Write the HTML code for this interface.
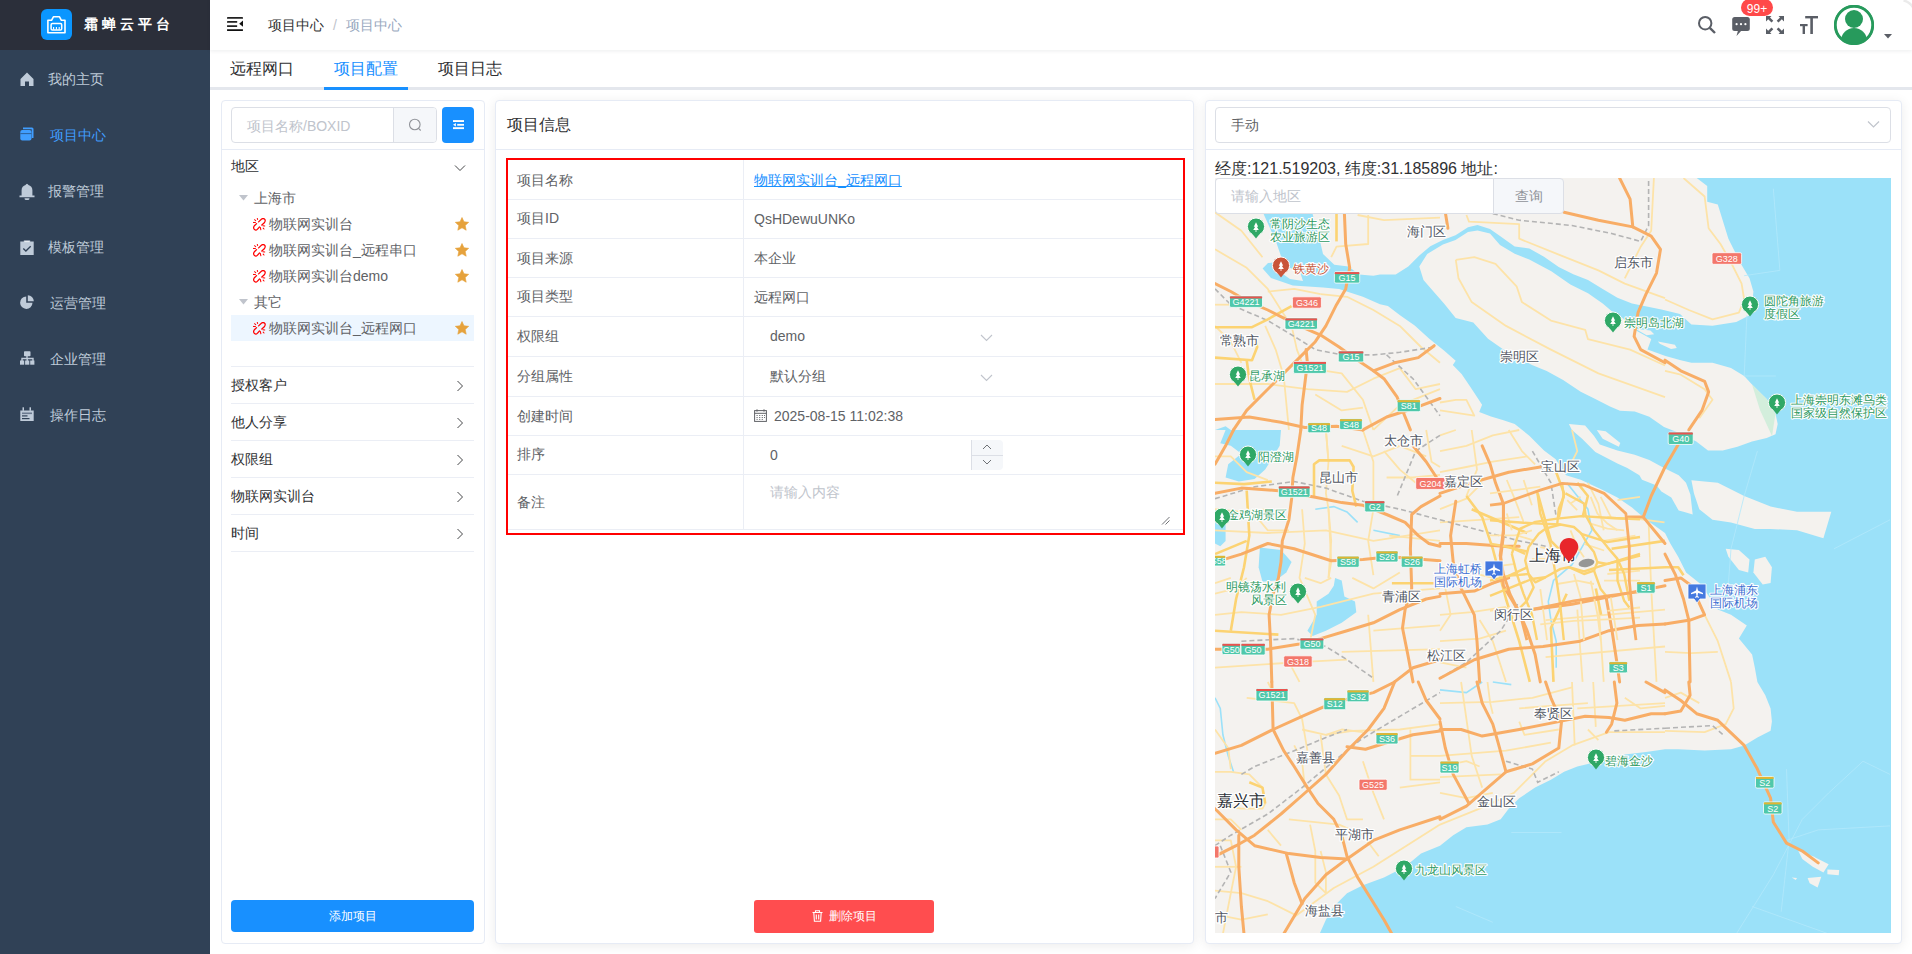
<!DOCTYPE html>
<html><head><meta charset="utf-8">
<style>
*{box-sizing:border-box;margin:0;padding:0}
html,body{width:1912px;height:954px;overflow:hidden;background:#fff;font-family:"Liberation Sans",sans-serif;font-size:14px;color:#303133}
.a{position:absolute;white-space:nowrap}
#side{position:absolute;left:0;top:0;width:210px;height:954px;background:#304156}
#logo{position:absolute;left:0;top:0;width:210px;height:50px;background:#2b2f3a}
.mt{position:absolute;line-height:16px;font-size:14px;color:#bfcbd9;white-space:nowrap}
.si{position:absolute;left:20px}
.hi{position:absolute}
.panel{position:absolute;background:#fff;border:1px solid #e6ebf5;border-radius:4px}
.sh{box-shadow:0 2px 12px 0 rgba(0,0,0,.08)}
.t14{font-size:14px;line-height:16px}
.hl{position:absolute;height:1px;background:#ebeef5}
.vl{position:absolute;width:1px;background:#ebeef5}
.lab{position:absolute;left:517px;font-size:14px;line-height:16px;color:#606266;white-space:nowrap}
.val{position:absolute;font-size:14px;line-height:16px;color:#606266;white-space:nowrap}
.chev{position:absolute}
</style></head><body>
<!-- SIDEBAR -->
<div id="side">
  <div id="logo">
    <svg class="a" style="left:41px;top:9px" width="31" height="31" viewBox="0 0 31 31">
      <rect width="31" height="31" rx="6" fill="#0a96ff"/>
      <path d="M6.9 23.8V11.3h3.6l1.9-3.5h6.1l1.9 3.5h3.6V23.8z" fill="none" stroke="#fff" stroke-width="1.6" stroke-linejoin="round"/>
      <rect x="10.1" y="14.4" width="10.6" height="6.6" rx="1.3" fill="none" stroke="#fff" stroke-width="1.5"/>
      <path d="M12.6 20.5v-2.6M15.4 20.5v-2.6M18.2 20.5v-2.6" stroke="#fff" stroke-width="1.1"/>
    </svg>
    <div class="a" style="left:84px;top:16px;font-size:14px;font-weight:bold;color:#fff;letter-spacing:4px;line-height:16px">霜蝉云平台</div>
  </div>
  <!-- home -->
  <svg class="si" style="top:72px" width="14" height="14" viewBox="0 0 14 14"><path d="M7 0.5L0.5 7v7h4.5v-4.5h4v4.5h4.5v-7z" fill="#bfcbd9"/></svg>
  <div class="mt" style="left:48px;top:71px">我的主页</div>
  <!-- project -->
  <svg class="si" style="top:127px" width="14" height="14" viewBox="0 0 14 14"><path d="M3 0.5h9a1.5 1.5 0 0 1 1.5 1.5v9h-1.8V2.3H3z" fill="#409eff"/><rect x="0.3" y="3" width="11.2" height="10.5" rx="2" fill="#409eff"/><rect x="0.3" y="6.2" width="11.2" height="0.9" fill="#2a5a8f"/></svg>
  <div class="mt" style="left:50px;top:127px;color:#409eff">项目中心</div>
  <!-- bell -->
  <svg class="si" style="top:183px;left:19px" width="16" height="17" viewBox="0 0 16 17"><path d="M8 0.8c-0.6 0-1 0.8-1.4 1.2C4.3 2.6 2.6 4.6 2.6 7.2V12.5H0.5v1.7h15v-1.7h-2.1V7.2c0-2.6-1.7-4.6-4-5.2C9 1.6 8.6 0.8 8 0.8z" fill="#bfcbd9"/><path d="M5.5 15.2a2.5 2 0 0 0 5 0z" fill="#bfcbd9"/></svg>
  <div class="mt" style="left:48px;top:183px">报警管理</div>
  <!-- clipboard -->
  <svg class="si" style="top:240px" width="14" height="15" viewBox="0 0 14 15"><path d="M0.3 1.5h3.5V0.5h6.4v1h3.5V15H0.3z" fill="#bfcbd9"/><rect x="4.5" y="0.8" width="5" height="1.4" fill="#fff" opacity=".6"/><path d="M3.3 8.5l2.6 2.5 4.8-4.7" fill="none" stroke="#304156" stroke-width="1.3"/></svg>
  <div class="mt" style="left:48px;top:239px">模板管理</div>
  <!-- pie -->
  <svg class="si" style="top:295px" width="14" height="14" viewBox="0 0 14 14"><path d="M6.2 1.5A6.2 6.2 0 1 0 12.5 7.8H6.2z" fill="#bfcbd9"/><path d="M7.8 0.2V6.3h6A6.2 6.2 0 0 0 7.8 0.2z" fill="#bfcbd9"/></svg>
  <div class="mt" style="left:50px;top:295px">运营管理</div>
  <!-- org -->
  <svg class="si" style="top:351px" width="15" height="14" viewBox="0 0 15 14"><rect x="4" y="0.2" width="6.5" height="5" rx="0.8" fill="#bfcbd9"/><path d="M7 5v2.2M2 10V7.5h11V10M7.2 7.5V10" fill="none" stroke="#bfcbd9" stroke-width="1.4"/><rect x="0" y="9.5" width="4.2" height="4.2" fill="#bfcbd9"/><rect x="5.1" y="9.5" width="4.2" height="4.2" fill="#bfcbd9"/><rect x="10.2" y="9.5" width="4.2" height="4.2" fill="#bfcbd9"/></svg>
  <div class="mt" style="left:50px;top:351px">企业管理</div>
  <!-- calendar -->
  <svg class="si" style="top:407px" width="14" height="14" viewBox="0 0 14 14"><path d="M0.3 3.5h13.4V14H0.3z" fill="#bfcbd9"/><rect x="2.5" y="0.3" width="1.5" height="3.5" fill="#bfcbd9"/><rect x="9.5" y="0.3" width="1.5" height="3.5" fill="#bfcbd9"/><rect x="2" y="5.5" width="10" height="1.6" fill="#6b7a8f"/><rect x="2" y="8.3" width="5.5" height="1.2" fill="#304156"/><rect x="2" y="11" width="7.5" height="1.2" fill="#304156"/></svg>
  <div class="mt" style="left:50px;top:407px">操作日志</div>
</div>

<!-- HEADER -->
<div class="a" style="left:210px;top:0;width:1702px;height:50px;background:#fff;box-shadow:0 1px 4px rgba(0,21,41,.08);z-index:2"></div>
<div style="position:absolute;left:0;top:0;z-index:3">
  <svg class="hi" style="left:227px;top:17px" width="16" height="14" viewBox="0 0 16 14"><rect x="0" y="0" width="16" height="1.8" rx="0.4" fill="#222"/><rect x="0" y="4.1" width="10.2" height="1.7" rx="0.4" fill="#222"/><rect x="0" y="8.2" width="10.2" height="1.7" rx="0.4" fill="#222"/><rect x="0" y="12.2" width="16" height="1.8" rx="0.4" fill="#111"/><path d="M16 3.6v6.2l-3.8-3.1z" fill="#111"/></svg>
  <div class="a t14" style="left:268px;top:17px;color:#303133">项目中心</div>
  <div class="a t14" style="left:333px;top:17px;color:#c0c4cc">/</div>
  <div class="a t14" style="left:346px;top:17px;color:#97a8be">项目中心</div>
  <!-- search -->
  <svg class="hi" style="left:1697px;top:15px" width="20" height="20" viewBox="0 0 20 20"><circle cx="8.2" cy="8.2" r="6.2" fill="none" stroke="#5a5e66" stroke-width="2"/><path d="M12.8 12.8l5.2 5.2" stroke="#5a5e66" stroke-width="2.4"/></svg>
  <!-- message -->
  <svg class="hi" style="left:1731px;top:16px" width="20" height="21" viewBox="0 0 20 21"><rect x="1.2" y="1" width="17.6" height="14" rx="2.5" fill="#5a5e66"/><path d="M7 14.5l-1.5 5.5 5-5.5z" fill="#5a5e66"/><circle cx="5.6" cy="8.2" r="1.1" fill="#fff"/><circle cx="10" cy="8.2" r="1.1" fill="#fff"/><circle cx="14.4" cy="8.2" r="1.1" fill="#fff"/></svg>
  <div class="a" style="left:1741px;top:-1px;width:32px;height:17px;border-radius:9px;background:#ff4949;color:#fff;font-size:12px;line-height:20px;text-align:center">99+</div>
  <!-- fullscreen -->
  <svg class="hi" style="left:1766px;top:16px" width="18" height="18" viewBox="0 0 18 18" fill="#5a5e66"><path d="M0 0h5.5L4 1.5l3.3 3.3-1.8 1.8L2.2 3.3 0 5.5z"/><path d="M18 0h-5.5L14 1.5l-3.3 3.3 1.8 1.8 3.3-3.3L18 5.5z"/><path d="M0 18h5.5L4 16.5l3.3-3.3-1.8-1.8-3.3 3.3L0 12.5z"/><path d="M18 18h-5.5l1.5-1.5-3.3-3.3 1.8-1.8 3.3 3.3 2.2-2.2z"/></svg>
  <!-- font size -->
  <svg class="hi" style="left:1800px;top:16px" width="19" height="18" viewBox="0 0 19 18" fill="#5a5e66"><rect x="5.2" y="0" width="12.8" height="2.4"/><rect x="10.3" y="0" width="2.6" height="18"/><rect x="0" y="8" width="7.6" height="2.2"/><rect x="2.6" y="8" width="2.4" height="10"/></svg>
  <!-- avatar -->
  <svg class="hi" style="left:1834px;top:5px" width="40" height="40" viewBox="0 0 40 40"><defs><clipPath id="avc"><circle cx="20" cy="20" r="18.5"/></clipPath></defs><circle cx="20" cy="20" r="18.6" fill="none" stroke="#279a5c" stroke-width="2.6"/><g clip-path="url(#avc)"><circle cx="20" cy="14" r="9" fill="#279a5c"/><ellipse cx="20" cy="36" rx="13" ry="13" fill="#279a5c"/></g><circle cx="20" cy="20" r="19" fill="none" stroke="#279a5c" stroke-width="2.2"/></svg>
  <svg class="hi" style="left:1884px;top:34px" width="8" height="5" viewBox="0 0 8 5"><path d="M0 0h8L4 4.5z" fill="#5a5e66"/></svg>
</div>

<!-- TABS -->
<div class="a" style="left:210px;top:87px;width:1702px;height:3px;background:#e4e7ed"></div>
<div class="a" style="left:230px;top:60px;font-size:16px;line-height:18px;color:#303133">远程网口</div>
<div class="a" style="left:334px;top:60px;font-size:16px;line-height:18px;color:#1890ff">项目配置</div>
<div class="a" style="left:438px;top:60px;font-size:16px;line-height:18px;color:#303133">项目日志</div>
<div class="a" style="left:324px;top:87px;width:84px;height:3px;background:#1890ff"></div>

<!-- LEFT PANEL -->
<div class="panel" style="left:221px;top:100px;width:264px;height:844px"></div>
<div class="a" style="left:231px;top:107px;width:206px;height:36px;border:1px solid #dcdfe6;border-radius:4px;background:#fff"></div>
<div class="a" style="left:393px;top:108px;width:43px;height:34px;background:#f5f7fa;border-left:1px solid #dcdfe6;border-radius:0 3px 3px 0"></div>
<div class="a t14" style="left:247px;top:118px;color:#c0c4cc">项目名称/BOXID</div>
<svg class="hi" style="left:408px;top:118px" width="14" height="14" viewBox="0 0 14 14"><circle cx="6.8" cy="6.5" r="5.3" fill="none" stroke="#909399" stroke-width="1.1"/><path d="M10.5 10.3l2.2 2.2" stroke="#909399" stroke-width="1.1"/></svg>
<div class="a" style="left:442px;top:107px;width:32px;height:36px;background:#1890ff;border-radius:4px"></div>
<svg class="hi" style="left:452px;top:119px" width="12" height="12" viewBox="0 0 12 12" fill="#fff"><rect x="1" y="1.1" width="11" height="1.9"/><rect x="5.2" y="4.9" width="6.8" height="1.8"/><rect x="1" y="8.2" width="11" height="1.9"/><path d="M3.9 4v3.6L1 5.8z"/></svg>
<div class="hl" style="left:222px;top:149px;width:262px;background:#e6ebf5"></div>
<div class="a t14" style="left:231px;top:158px;color:#303133">地区</div>
<svg class="chev" style="left:454px;top:164px" width="12" height="8" viewBox="0 0 12 8"><path d="M1 1.5l5 5 5-5" fill="none" stroke="#303133" stroke-width="0.9"/></svg>
<svg class="hi" style="left:239px;top:195px" width="9" height="6" viewBox="0 0 9 6"><path d="M0 0h9L4.5 5.5z" fill="#c0c4cc"/></svg>
<div class="a t14" style="left:254px;top:190px;color:#606266">上海市</div>
<div class="a" style="left:231px;top:315px;width:243px;height:26px;background:#edf6ff"></div>
<svg class="hi" style="left:239px;top:299px" width="9" height="6" viewBox="0 0 9 6"><path d="M0 0h9L4.5 5.5z" fill="#c0c4cc"/></svg>
<div class="a t14" style="left:254px;top:294px;color:#606266">其它</div>
<svg class="hi" style="left:253px;top:218px" width="13" height="13" viewBox="0 0 13 13"><path d="M5.6 3.9L8.6 1.1Q10.6 -0.3 12 1.6Q12.6 3.2 11.3 4.8L8.8 7" fill="none" stroke="#f00" stroke-width="1.25" stroke-linecap="round"/><path d="M3.6 5.6L1.2 8Q-0.1 9.9 1.5 11.6Q3 12.6 4.3 11.4L6.5 9" fill="none" stroke="#f00" stroke-width="1.25" stroke-linecap="round"/><path d="M1.5 1.7L2.7 2.6M0.5 4.4L2.4 4.6M4.3 0.5L4.6 1.4M9.8 7.8L11.8 8M10.2 10.1L11 11M7.3 9.4L7.9 11.8" stroke="#f00" stroke-width="1.05" stroke-linecap="round"/></svg>
<div class="a t14" style="left:269px;top:216px;color:#606266">物联网实训台</div>
<svg class="hi" style="left:455px;top:217px" width="14" height="14" viewBox="0 0 14 14"><path d="M7 0.5l2 4.3 4.7 0.5-3.5 3.2 1 4.7L7 10.8 2.8 13.2l1-4.7L0.3 5.3 5 4.8z" fill="#e6a23c" stroke="#e6a23c" stroke-width="0.6" stroke-linejoin="round"/></svg>
<svg class="hi" style="left:253px;top:244px" width="13" height="13" viewBox="0 0 13 13"><path d="M5.6 3.9L8.6 1.1Q10.6 -0.3 12 1.6Q12.6 3.2 11.3 4.8L8.8 7" fill="none" stroke="#f00" stroke-width="1.25" stroke-linecap="round"/><path d="M3.6 5.6L1.2 8Q-0.1 9.9 1.5 11.6Q3 12.6 4.3 11.4L6.5 9" fill="none" stroke="#f00" stroke-width="1.25" stroke-linecap="round"/><path d="M1.5 1.7L2.7 2.6M0.5 4.4L2.4 4.6M4.3 0.5L4.6 1.4M9.8 7.8L11.8 8M10.2 10.1L11 11M7.3 9.4L7.9 11.8" stroke="#f00" stroke-width="1.05" stroke-linecap="round"/></svg>
<div class="a t14" style="left:269px;top:242px;color:#606266">物联网实训台_远程串口</div>
<svg class="hi" style="left:455px;top:243px" width="14" height="14" viewBox="0 0 14 14"><path d="M7 0.5l2 4.3 4.7 0.5-3.5 3.2 1 4.7L7 10.8 2.8 13.2l1-4.7L0.3 5.3 5 4.8z" fill="#e6a23c" stroke="#e6a23c" stroke-width="0.6" stroke-linejoin="round"/></svg>
<svg class="hi" style="left:253px;top:270px" width="13" height="13" viewBox="0 0 13 13"><path d="M5.6 3.9L8.6 1.1Q10.6 -0.3 12 1.6Q12.6 3.2 11.3 4.8L8.8 7" fill="none" stroke="#f00" stroke-width="1.25" stroke-linecap="round"/><path d="M3.6 5.6L1.2 8Q-0.1 9.9 1.5 11.6Q3 12.6 4.3 11.4L6.5 9" fill="none" stroke="#f00" stroke-width="1.25" stroke-linecap="round"/><path d="M1.5 1.7L2.7 2.6M0.5 4.4L2.4 4.6M4.3 0.5L4.6 1.4M9.8 7.8L11.8 8M10.2 10.1L11 11M7.3 9.4L7.9 11.8" stroke="#f00" stroke-width="1.05" stroke-linecap="round"/></svg>
<div class="a t14" style="left:269px;top:268px;color:#606266">物联网实训台demo</div>
<svg class="hi" style="left:455px;top:269px" width="14" height="14" viewBox="0 0 14 14"><path d="M7 0.5l2 4.3 4.7 0.5-3.5 3.2 1 4.7L7 10.8 2.8 13.2l1-4.7L0.3 5.3 5 4.8z" fill="#e6a23c" stroke="#e6a23c" stroke-width="0.6" stroke-linejoin="round"/></svg>
<svg class="hi" style="left:253px;top:322px" width="13" height="13" viewBox="0 0 13 13"><path d="M5.6 3.9L8.6 1.1Q10.6 -0.3 12 1.6Q12.6 3.2 11.3 4.8L8.8 7" fill="none" stroke="#f00" stroke-width="1.25" stroke-linecap="round"/><path d="M3.6 5.6L1.2 8Q-0.1 9.9 1.5 11.6Q3 12.6 4.3 11.4L6.5 9" fill="none" stroke="#f00" stroke-width="1.25" stroke-linecap="round"/><path d="M1.5 1.7L2.7 2.6M0.5 4.4L2.4 4.6M4.3 0.5L4.6 1.4M9.8 7.8L11.8 8M10.2 10.1L11 11M7.3 9.4L7.9 11.8" stroke="#f00" stroke-width="1.05" stroke-linecap="round"/></svg>
<div class="a t14" style="left:269px;top:320px;color:#606266">物联网实训台_远程网口</div>
<svg class="hi" style="left:455px;top:321px" width="14" height="14" viewBox="0 0 14 14"><path d="M7 0.5l2 4.3 4.7 0.5-3.5 3.2 1 4.7L7 10.8 2.8 13.2l1-4.7L0.3 5.3 5 4.8z" fill="#e6a23c" stroke="#e6a23c" stroke-width="0.6" stroke-linejoin="round"/></svg>
<div class="hl" style="left:231px;top:366px;width:243px"></div>
<div class="hl" style="left:231px;top:403px;width:243px"></div>
<div class="hl" style="left:231px;top:440px;width:243px"></div>
<div class="hl" style="left:231px;top:477px;width:243px"></div>
<div class="hl" style="left:231px;top:514px;width:243px"></div>
<div class="hl" style="left:231px;top:551px;width:243px"></div>
<div class="a t14" style="left:231px;top:377px;color:#303133">授权客户</div>
<div class="a t14" style="left:231px;top:414px;color:#303133">他人分享</div>
<div class="a t14" style="left:231px;top:451px;color:#303133">权限组</div>
<div class="a t14" style="left:231px;top:488px;color:#303133">物联网实训台</div>
<div class="a t14" style="left:231px;top:525px;color:#303133">时间</div>
<svg class="chev" style="left:456px;top:380px" width="8" height="12" viewBox="0 0 8 12"><path d="M1.5 1l5 5-5 5" fill="none" stroke="#303133" stroke-width="0.9"/></svg>
<svg class="chev" style="left:456px;top:417px" width="8" height="12" viewBox="0 0 8 12"><path d="M1.5 1l5 5-5 5" fill="none" stroke="#303133" stroke-width="0.9"/></svg>
<svg class="chev" style="left:456px;top:454px" width="8" height="12" viewBox="0 0 8 12"><path d="M1.5 1l5 5-5 5" fill="none" stroke="#303133" stroke-width="0.9"/></svg>
<svg class="chev" style="left:456px;top:491px" width="8" height="12" viewBox="0 0 8 12"><path d="M1.5 1l5 5-5 5" fill="none" stroke="#303133" stroke-width="0.9"/></svg>
<svg class="chev" style="left:456px;top:528px" width="8" height="12" viewBox="0 0 8 12"><path d="M1.5 1l5 5-5 5" fill="none" stroke="#303133" stroke-width="0.9"/></svg>
<div class="a" style="left:231px;top:900px;width:243px;height:32px;background:#1890ff;border-radius:4px;color:#fff;font-size:12px;line-height:32px;text-align:center">添加项目</div>

<!-- MIDDLE PANEL -->
<div class="panel sh" style="left:495px;top:100px;width:699px;height:844px"></div>
<div class="a" style="left:507px;top:116px;font-size:16px;line-height:18px;color:#303133">项目信息</div>
<div class="hl" style="left:496px;top:149px;width:697px;background:#e6ebf5"></div>
<div class="hl" style="left:508px;top:199px;width:675px"></div>
<div class="hl" style="left:508px;top:238px;width:675px"></div>
<div class="hl" style="left:508px;top:277px;width:675px"></div>
<div class="hl" style="left:508px;top:316px;width:675px"></div>
<div class="hl" style="left:508px;top:356px;width:675px"></div>
<div class="hl" style="left:508px;top:396px;width:675px"></div>
<div class="hl" style="left:508px;top:435px;width:675px"></div>
<div class="hl" style="left:508px;top:474px;width:675px"></div>
<div class="hl" style="left:508px;top:529px;width:675px"></div>
<div class="vl" style="left:743px;top:160px;height:370px"></div>
<div class="a" style="left:506px;top:158px;width:679px;height:377px;border:2px solid #f00"></div>
<div class="lab" style="top:172px">项目名称</div>
<div class="lab" style="top:210px">项目ID</div>
<div class="lab" style="top:250px">项目来源</div>
<div class="lab" style="top:288px">项目类型</div>
<div class="lab" style="top:328px">权限组</div>
<div class="lab" style="top:368px">分组属性</div>
<div class="lab" style="top:408px">创建时间</div>
<div class="lab" style="top:446px">排序</div>
<div class="lab" style="top:494px">备注</div>
<div class="val" style="left:754px;top:172px;color:#1890ff;text-decoration:underline">物联网实训台_远程网口</div>
<div class="val" style="left:754px;top:211px">QsHDewuUNKo</div>
<div class="val" style="left:754px;top:250px">本企业</div>
<div class="val" style="left:754px;top:289px">远程网口</div>
<div class="val" style="left:770px;top:328px">demo</div>
<svg class="chev" style="left:980px;top:334px" width="13" height="8" viewBox="0 0 13 8"><path d="M1 1l5.5 5.5 5.5-5.5" fill="none" stroke="#c0c4cc" stroke-width="1.1"/></svg>
<div class="val" style="left:770px;top:368px">默认分组</div>
<svg class="chev" style="left:980px;top:374px" width="13" height="8" viewBox="0 0 13 8"><path d="M1 1l5.5 5.5 5.5-5.5" fill="none" stroke="#c0c4cc" stroke-width="1.1"/></svg>
<svg class="hi" style="left:754px;top:409px" width="13" height="13" viewBox="0 0 13 13"><rect x="0.6" y="1.6" width="11.8" height="10.8" fill="none" stroke="#606266" stroke-width="1"/><path d="M0.6 4.3h11.8" stroke="#606266" stroke-width="1"/><path d="M3 0.3v2.4M10 0.3v2.4" stroke="#606266" stroke-width="1"/><path d="M2.5 6.5h1.2M5.1 6.5h1.2M7.7 6.5h1.2M10 6.5h1M2.5 8.5h1.2M5.1 8.5h1.2M7.7 8.5h1.2M10 8.5h1M2.5 10.4h1.2M5.1 10.4h1.2M7.7 10.4h1.2" stroke="#606266" stroke-width="0.9"/></svg>
<div class="val" style="left:774px;top:408px">2025-08-15 11:02:38</div>
<div class="val" style="left:770px;top:447px">0</div>
<div class="a" style="left:971px;top:440px;width:32px;height:30px;background:#f5f7fa;border-left:1px solid #dcdfe6;border-radius:0 4px 4px 0"></div>
<div class="hl" style="left:972px;top:455px;width:31px;background:#dcdfe6"></div>
<svg class="chev" style="left:982px;top:444px" width="10" height="6" viewBox="0 0 10 6"><path d="M1 5l4-4 4 4" fill="none" stroke="#606266" stroke-width="0.9"/></svg>
<svg class="chev" style="left:982px;top:459px" width="10" height="6" viewBox="0 0 10 6"><path d="M1 1l4 4 4-4" fill="none" stroke="#606266" stroke-width="0.9"/></svg>
<div class="val" style="left:770px;top:484px;color:#c0c4cc">请输入内容</div>
<svg class="hi" style="left:1161px;top:516px" width="9" height="9" viewBox="0 0 9 9"><path d="M1 8.5L8.5 1M4.5 8.5L8.5 4.5" stroke="#606266" stroke-width="0.9"/></svg>

<div class="a" style="left:754px;top:900px;width:180px;height:33px;background:#ff4d4f;border-radius:3px;color:#fff;font-size:12px;line-height:33px;text-align:center;padding-left:18px">删除项目</div>
<svg class="hi" style="left:812px;top:910px" width="11" height="12" viewBox="0 0 11 12"><path d="M0.5 2.5h10M3.5 2.5V0.8h4v1.7M1.8 2.5l0.6 8.7h6.2l0.6-8.7M4.3 4.5v5M6.7 4.5v5" fill="none" stroke="#fff" stroke-width="1.1"/></svg>

<!-- RIGHT PANEL -->
<div class="panel sh" style="left:1205px;top:100px;width:697px;height:844px"></div>
<div class="a" style="left:1215px;top:107px;width:676px;height:36px;border:1px solid #dcdfe6;border-radius:4px"></div>
<div class="a t14" style="left:1231px;top:117px;color:#606266">手动</div>
<svg class="chev" style="left:1867px;top:120px" width="13" height="9" viewBox="0 0 13 9"><path d="M1 1.5l5.5 5.5 5.5-5.5" fill="none" stroke="#c0c4cc" stroke-width="1.2"/></svg>
<div class="hl" style="left:1206px;top:149px;width:695px;background:#e6ebf5"></div>
<div class="a" style="left:1215px;top:160px;font-size:16px;line-height:18px;color:#303133">经度:121.519203, 纬度:31.185896 地址:</div>
<div id="map" class="a" style="left:1215px;top:178px;width:676px;height:755px;background:#f4f2ef;overflow:hidden"><!--MAP--><svg width="676" height="755" viewBox="0 0 676 755" style="position:absolute;left:0;top:0">
<path d="M48.6 0.0 L97.6 0.0 L97.6 36.0 L105.0 63.0 L108.0 76.0 L119.3 86.7 L133.5 88.6 L144.0 96.4 L158.4 97.7 L165.0 96.5 L180.7 96.5 L193.3 88.6 L204.3 77.6 L215.3 68.2 L227.9 61.9 L240.5 57.2 L253.0 49.3 L262.5 46.9 L275.0 50.9 L285.0 58.1 L299.7 68.4 L314.3 70.6 L329.0 78.7 L343.7 88.9 L358.3 96.3 L373.0 102.1 L387.7 110.9 L402.4 119.7 L417.0 125.6 L431.7 128.5 L446.4 131.5 L465.0 135.9 L476.4 146.5 L497.5 147.8 L521.3 143.9 L534.5 137.3 L537.1 126.7 L538.4 113.5 L534.5 100.3 L526.6 87.1 L516.0 66.0 L513.4 60.7 L502.8 26.4 L492.2 23.8 L492.2 7.9 L481.7 0.0 L676.0 0.0 L676.0 755.0 L105.0 755.0 L110.9 741.7 L118.8 728.5 L132.0 715.3 L147.9 707.3 L169.0 699.4 L190.1 688.8 L206.0 675.6 L225.0 667.7 L238.2 657.2 L251.4 649.2 L272.5 646.6 L285.7 641.3 L293.7 630.7 L304.2 620.2 L320.1 609.6 L335.9 601.7 L349.1 593.8 L362.3 588.5 L372.9 585.9 L388.7 580.6 L409.8 576.6 L431.0 574.0 L450.0 571.3 L463.2 571.3 L489.6 572.6 L516.0 571.3 L529.2 567.4 L542.4 559.4 L555.6 552.8 L556.9 543.6 L555.6 530.4 L550.3 517.2 L542.4 504.0 L539.8 489.6 L537.1 476.4 L523.9 460.6 L531.8 447.4 L516.0 436.8 L502.8 431.5 L492.2 415.7 L484.3 405.1 L471.1 394.6 L463.2 378.7 L455.3 365.5 L450.0 355.0 L431.7 342.0 L417.0 329.6 L402.4 319.4 L387.7 312.0 L365.7 301.7 L351.0 297.3 L340.7 281.2 L329.0 272.4 L314.3 257.7 L299.7 246.0 L287.7 242.0 L276.0 238.4 L264.2 234.0 L267.1 226.7 L255.4 209.1 L246.6 195.9 L237.8 187.1 L240.7 182.7 L229.0 172.4 L214.3 160.7 L199.7 147.5 L185.0 137.2 L172.9 127.9 L165.0 126.3 L147.9 118.8 L124.1 110.9 L108.0 109.4 L77.8 107.5 L56.0 100.0 L47.6 90.5 L53.0 85.0 L68.0 84.0 L65.6 77.0 L60.8 63.0 L48.6 36.0Z" fill="#9be1f9"/>
<path d="M442.9 163.4 L459.9 166.7 L461.8 170.0 L456.1 171.0 L444.8 165.8Z" fill="#f4f2ee"/>
<path d="M420.3 150.7 L435.4 152.6 L439.2 156.3 L431.6 157.3Z" fill="#f4f2ee"/>
<path d="M583.3 673.0 L597.8 678.2 L613.7 686.2 L608.4 694.6 L597.8 688.8 L587.3 680.9Z" fill="#f4f2ee"/>
<path d="M612.4 691.4 L624.2 692.0 L623.7 697.2 L612.4 696.2Z" fill="#f4f2ee"/>
<path d="M592.6 699.9 L606.3 698.8 L602.6 709.4 L594.7 705.2Z" fill="#f4f2ee"/>
<path d="M576.7 699.4 L582.0 699.9 L580.7 702.0Z" fill="#f4f2ee"/>
<path d="M204.3 88.6 L212.2 76.0 L227.9 66.6 L240.5 61.9 L253.0 54.0 L262.5 52.4 L275.0 55.6 L285.0 66.9 L299.7 75.7 L314.3 81.6 L336.3 93.3 L355.4 106.5 L373.0 115.3 L387.7 125.6 L396.5 133.0 L408.0 140.3 L419.3 151.6 L436.3 161.0 L432.5 171.4 L450.5 178.0 L465.8 182.2 L476.4 184.8 L497.5 184.8 L516.0 190.1 L529.2 198.0 L537.0 206.4 L551.7 221.1 L560.5 235.7 L562.7 246.0 L560.5 256.3 L551.7 259.9 L537.0 263.6 L522.4 268.7 L507.7 272.4 L493.0 272.4 L481.3 263.6 L463.7 254.8 L449.0 249.0 L434.3 238.7 L419.7 233.5 L405.0 232.8 L395.0 228.4 L380.3 221.1 L365.7 213.7 L348.1 202.0 L331.7 193.0 L317.0 187.1 L287.7 171.0 L273.0 160.7 L258.3 144.5 L240.7 140.1 L229.0 125.5 L218.7 113.7 L208.5 102.0Z" fill="#f4f2ee"/>
<path d="M353.9 246.0 L370.1 247.5 L378.9 257.7 L384.8 266.5 L402.4 272.4 L419.7 276.8 L434.3 282.0 L449.0 290.0 L463.7 297.3 L471.0 304.7 L475.4 316.4 L477.7 336.5 L468.5 333.8 L463.7 332.6 L456.3 319.4 L446.4 313.5 L441.7 307.6 L427.0 301.7 L424.4 297.3 L412.3 290.0 L402.4 285.6 L380.3 273.9 L367.1 260.7 L356.9 251.9Z" fill="#f4f2ee"/>
<path d="M476.4 302.2 L502.8 304.8 L529.2 318.0 L555.6 328.6 L582.0 333.8 L616.3 333.8 L608.4 360.2 L582.0 352.3 L555.6 351.0 L539.8 351.0 L516.0 344.4 L497.5 341.8 L484.3 331.2 L479.0 315.4Z" fill="#f4f2ee"/>
<path d="M381.8 251.9 L390.6 253.3 L405.3 265.1 L403.8 268.7 L387.7 260.7Z" fill="#f4f2ee"/>
<path d="M510.7 370.8 L523.9 372.1 L534.5 381.4 L533.2 394.6 L523.9 391.9 L513.4 378.7Z" fill="#f4f2ee"/>
<path d="M539.8 381.4 L550.3 378.7 L556.9 389.3 L555.6 405.1 L547.7 406.4 L538.4 394.6Z" fill="#f4f2ee"/>
<path d="M68.0 87.0 L85.0 94.0 L88.0 103.0 L75.0 101.0 L65.0 94.0Z" fill="#f4f2ee"/>
</svg>
<svg width="676" height="755" viewBox="0 0 676 755" style="position:absolute;left:0;top:0"><path d="M648.0 583.2 L613.7 614.9 L587.3 641.3 L558.3 696.8 L521.3 755.9" fill="none" stroke="#b3e8fb" stroke-width="0.8"/>
<path d="M571.5 662.4 L603.2 651.9 L675.0 647.9" fill="none" stroke="#b3e8fb" stroke-width="0.8"/>
<path d="M537.1 728.5 L613.7 755.9" fill="none" stroke="#b3e8fb" stroke-width="0.8"/>
<path d="M648.0 583.2 L675.0 596.4" fill="none" stroke="#b3e8fb" stroke-width="0.8"/>
<path d="M571.5 591.1 L574.1 662.4 L566.2 733.7" fill="none" stroke="#b3e8fb" stroke-width="0.8"/>
<path d="M542.4 273.1 L529.2 318.0 L516.0 370.8 L513.4 405.2" fill="none" stroke="#b3e8fb" stroke-width="0.8"/>
<path d="M619.0 370.8 L675.0 341.8" fill="none" stroke="#b3e8fb" stroke-width="0.8"/>
<path d="M558.3 10.6 L564.9 92.4 L529.2 97.7" fill="none" stroke="#b3e8fb" stroke-width="0.8"/>
<path d="M531.9 137.3 L529.2 198.0 L560.9 198.0" fill="none" stroke="#b3e8fb" stroke-width="0.8"/>
<path d="M240.8 728.5 L277.8 744.3" fill="none" stroke="#b3e8fb" stroke-width="0.8"/>
<path d="M296.3 654.5 L346.5 654.5" fill="none" stroke="#b3e8fb" stroke-width="0.8"/>
<path d="M10.6 252.0 L66.0 252.0 L64.7 267.8 L56.8 281.0 L50.2 291.6 L39.6 300.9 L23.8 303.5 L10.6 299.5 L13.2 286.3 L26.4 275.8 L15.8 267.8 L5.3 265.2Z" fill="#9be1f9"/>
<path d="M0.0 344.4 L10.6 347.1 L10.6 362.9 L5.3 368.2 L0.0 365.5Z" fill="#9be1f9"/>
<path d="M44.9 369.5 L66.0 372.1 L76.6 384.0 L71.3 394.6 L60.7 402.5 L47.5 403.8 L43.6 389.3Z" fill="#9be1f9"/>
<path d="M120.1 399.9 L126.7 402.5 L129.4 418.4 L140.0 423.6 L141.3 434.2 L126.7 444.8 L110.9 452.7 L97.7 458.0 L92.4 452.7 L101.7 436.8 L101.7 423.6 L113.5 415.7 L118.8 407.8Z" fill="#9be1f9"/>
<path d="M0.0 251.9 L10.6 248.2 L15.8 251.9Z" fill="#9be1f9"/>
<path d="M351.7 304.8 L362.3 318.0 L372.9 331.2 L376.8 352.3 L367.6 368.2 L357.0 386.7 L338.5 402.5 L333.3 423.6 L335.9 442.1 L341.2 463.2 L341.2 489.7" fill="none" stroke="#9be1f9" stroke-width="1.6"/>
<path d="M0.0 519.8 L5.3 530.4 L7.9 556.8 L13.2 577.9 L18.5 593.8" fill="none" stroke="#9be1f9" stroke-width="1.6"/>
<path d="M100.3 331.2 L118.8 328.6 L132.0 333.9 L142.6 344.4" fill="none" stroke="#9be1f9" stroke-width="1.6"/>
<path d="M158.4 352.3 L184.8 357.6" fill="none" stroke="#9be1f9" stroke-width="1.6"/>
<path d="M225.0 511.9 L251.4 514.6 L267.2 504.0" fill="none" stroke="#9be1f9" stroke-width="1.6"/>
<path d="M277.8 504.0 L296.3 506.6" fill="none" stroke="#9be1f9" stroke-width="1.6"/>
<path d="M0.0 71.3 L31.7 89.8 L52.8 110.9 L66.0 132.0 L76.6 147.9 L81.9 171.6 L87.1 184.8" fill="none" stroke="#fde3a8" stroke-width="1.8" stroke-linejoin="round"/>
<path d="M105.6 116.2 L132.0 118.8 L158.4 132.0 L184.8 147.9 L206.0 169.0 L225.0 184.8" fill="none" stroke="#fde3a8" stroke-width="1.8" stroke-linejoin="round"/>
<path d="M92.4 190.1 L126.7 195.4 L147.9 221.8 L158.4 251.9" fill="none" stroke="#fde3a8" stroke-width="1.8" stroke-linejoin="round"/>
<path d="M0.0 206.0 L52.8 206.0 L92.4 211.2 L132.0 213.9 L158.4 200.7 L184.8 190.1" fill="none" stroke="#fde3a8" stroke-width="1.8" stroke-linejoin="round"/>
<path d="M142.6 37.0 L169.0 42.2 L225.0 39.6" fill="none" stroke="#fde3a8" stroke-width="1.8" stroke-linejoin="round"/>
<path d="M153.2 37.0 L153.2 66.0 L121.5 68.7 L116.2 79.2" fill="none" stroke="#fde3a8" stroke-width="1.8" stroke-linejoin="round"/>
<path d="M0.0 126.7 L26.4 126.7" fill="none" stroke="#fde3a8" stroke-width="1.8" stroke-linejoin="round"/>
<path d="M50.2 147.9 L60.7 171.6 L68.7 198.0 L73.9 251.9" fill="none" stroke="#fde3a8" stroke-width="1.8" stroke-linejoin="round"/>
<path d="M158.4 251.9 L184.8 227.1 L225.0 211.2" fill="none" stroke="#fde3a8" stroke-width="1.8" stroke-linejoin="round"/>
<path d="M251.4 37.0 L254.0 43.6 L304.2 46.2 L304.2 60.7 L343.8 76.6 L383.4 92.4 L409.8 105.6 L450.0 120.1" fill="none" stroke="#fde3a8" stroke-width="1.8" stroke-linejoin="round"/>
<path d="M240.8 81.9 L259.3 79.2 L280.5 85.8 L301.6 108.3 L306.9 124.1 L335.9 142.6 L370.2 151.8 L372.9 161.1 L415.1 171.6 L450.0 187.5" fill="none" stroke="#fde3a8" stroke-width="1.8" stroke-linejoin="round"/>
<path d="M240.8 81.9 L243.5 100.3 L256.7 124.1 L291.0 147.9 L335.9 171.6 L383.4 195.4 L450.0 219.2" fill="none" stroke="#fde3a8" stroke-width="1.8" stroke-linejoin="round"/>
<path d="M409.8 100.3 L425.7 68.7 L436.2 52.8 L438.9 0.0" fill="none" stroke="#fde3a8" stroke-width="1.8" stroke-linejoin="round"/>
<path d="M225.0 224.5 L240.8 221.8 L251.4 221.8 L259.3 237.7 L225.0 232.4" fill="none" stroke="#fde3a8" stroke-width="1.8" stroke-linejoin="round"/>
<path d="M468.5 0.0 L489.6 18.5 L493.6 50.2 L505.5 66.0 L516.0 84.5 L526.6 105.6 L529.2 121.5 L523.9 134.7 L497.5 141.3 L473.8 132.0 L450.0 121.5" fill="none" stroke="#fde3a8" stroke-width="1.8" stroke-linejoin="round"/>
<path d="M450.0 192.8 L465.8 196.7 L489.6 211.2 L497.5 221.8 L484.3 240.3" fill="none" stroke="#fde3a8" stroke-width="1.8" stroke-linejoin="round"/>
<path d="M110.9 252.0 L113.5 283.7" fill="none" stroke="#fde3a8" stroke-width="1.8" stroke-linejoin="round"/>
<path d="M147.9 252.0 L158.4 283.7 L158.4 331.2 L153.2 362.9 L158.4 397.2" fill="none" stroke="#fde3a8" stroke-width="1.8" stroke-linejoin="round"/>
<path d="M0.0 352.3 L52.8 355.0 L110.9 352.3 L158.4 362.9 L225.0 352.3" fill="none" stroke="#fde3a8" stroke-width="1.8" stroke-linejoin="round"/>
<path d="M87.1 331.2 L89.8 365.5 L84.5 399.9 L100.3 436.8 L95.1 463.2" fill="none" stroke="#fde3a8" stroke-width="1.8" stroke-linejoin="round"/>
<path d="M113.5 331.2 L116.2 384.0 L113.5 399.9" fill="none" stroke="#fde3a8" stroke-width="1.8" stroke-linejoin="round"/>
<path d="M0.0 436.8 L26.4 434.2 L66.0 436.8 L105.6 428.9 L158.4 415.7 L225.0 410.4" fill="none" stroke="#fde3a8" stroke-width="1.8" stroke-linejoin="round"/>
<path d="M153.2 436.8 L158.4 503.9" fill="none" stroke="#fde3a8" stroke-width="1.8" stroke-linejoin="round"/>
<path d="M158.4 452.7 L225.0 447.4" fill="none" stroke="#fde3a8" stroke-width="1.8" stroke-linejoin="round"/>
<path d="M0.0 489.7 L79.2 484.4 L132.0 481.7" fill="none" stroke="#fde3a8" stroke-width="1.8" stroke-linejoin="round"/>
<path d="M169.0 273.1 L184.8 291.6 L200.7 304.8" fill="none" stroke="#fde3a8" stroke-width="1.8" stroke-linejoin="round"/>
<path d="M39.6 336.5 L52.8 352.3 L73.9 352.3" fill="none" stroke="#fde3a8" stroke-width="1.8" stroke-linejoin="round"/>
<path d="M225.0 273.1 L251.4 267.8 L277.8 257.3 L304.2 252.0" fill="none" stroke="#fde3a8" stroke-width="1.8" stroke-linejoin="round"/>
<path d="M256.7 252.0 L262.0 291.6 L251.4 318.0" fill="none" stroke="#fde3a8" stroke-width="1.8" stroke-linejoin="round"/>
<path d="M293.7 252.0 L306.9 273.1 L320.1 286.3" fill="none" stroke="#fde3a8" stroke-width="1.8" stroke-linejoin="round"/>
<path d="M225.0 294.2 L251.4 289.0 L277.8 283.7 L312.1 278.4" fill="none" stroke="#fde3a8" stroke-width="1.8" stroke-linejoin="round"/>
<path d="M225.0 344.4 L264.6 341.8 L304.2 339.1" fill="none" stroke="#fde3a8" stroke-width="1.8" stroke-linejoin="round"/>
<path d="M225.0 389.3 L256.7 394.6 L277.8 399.9" fill="none" stroke="#fde3a8" stroke-width="1.8" stroke-linejoin="round"/>
<path d="M225.0 436.8 L256.7 434.2 L291.0 428.9" fill="none" stroke="#fde3a8" stroke-width="1.8" stroke-linejoin="round"/>
<path d="M225.0 463.2 L264.6 460.6 L291.0 452.7" fill="none" stroke="#fde3a8" stroke-width="1.8" stroke-linejoin="round"/>
<path d="M362.3 431.6 L367.6 503.9" fill="none" stroke="#fde3a8" stroke-width="1.8" stroke-linejoin="round"/>
<path d="M383.4 423.6 L388.7 503.9" fill="none" stroke="#fde3a8" stroke-width="1.8" stroke-linejoin="round"/>
<path d="M433.6 344.4 L436.2 410.4 L441.5 503.9" fill="none" stroke="#fde3a8" stroke-width="1.8" stroke-linejoin="round"/>
<path d="M330.6 442.1 L450.0 431.6" fill="none" stroke="#fde3a8" stroke-width="1.8" stroke-linejoin="round"/>
<path d="M330.6 479.1 L450.0 468.5" fill="none" stroke="#fde3a8" stroke-width="1.8" stroke-linejoin="round"/>
<path d="M372.9 304.8 L383.4 325.9 L388.7 352.3" fill="none" stroke="#fde3a8" stroke-width="1.8" stroke-linejoin="round"/>
<path d="M409.8 339.1 L449.5 344.4" fill="none" stroke="#fde3a8" stroke-width="1.8" stroke-linejoin="round"/>
<path d="M388.7 362.9 L420.4 357.6" fill="none" stroke="#fde3a8" stroke-width="1.8" stroke-linejoin="round"/>
<path d="M489.6 436.8 L502.8 463.2 L516.0 503.9" fill="none" stroke="#fde3a8" stroke-width="1.8" stroke-linejoin="round"/>
<path d="M450.0 473.8 L476.4 475.1 L502.8 473.8" fill="none" stroke="#fde3a8" stroke-width="1.8" stroke-linejoin="round"/>
<path d="M0.0 688.8 L26.4 688.8" fill="none" stroke="#fde3a8" stroke-width="1.8" stroke-linejoin="round"/>
<path d="M79.2 739.0 L118.8 710.0 L158.4 688.8 L225.0 646.6" fill="none" stroke="#fde3a8" stroke-width="1.8" stroke-linejoin="round"/>
<path d="M87.1 551.5 L110.9 556.8 L126.7 551.5 L147.9 554.2" fill="none" stroke="#fde3a8" stroke-width="1.8" stroke-linejoin="round"/>
<path d="M105.6 556.8 L110.9 596.4 L124.1 617.5 L132.0 641.3 L147.9 641.3" fill="none" stroke="#fde3a8" stroke-width="1.8" stroke-linejoin="round"/>
<path d="M73.9 641.3 L124.1 646.6 L147.9 657.2 L163.7 678.3" fill="none" stroke="#fde3a8" stroke-width="1.8" stroke-linejoin="round"/>
<path d="M95.1 646.6 L100.3 673.0 L100.3 704.7 L110.9 715.2" fill="none" stroke="#fde3a8" stroke-width="1.8" stroke-linejoin="round"/>
<path d="M0.0 551.5 L13.2 570.0 L15.8 591.1" fill="none" stroke="#fde3a8" stroke-width="1.8" stroke-linejoin="round"/>
<path d="M195.4 551.5 L195.4 601.7 L225.0 601.7" fill="none" stroke="#fde3a8" stroke-width="1.8" stroke-linejoin="round"/>
<path d="M195.4 577.9 L225.0 577.9" fill="none" stroke="#fde3a8" stroke-width="1.8" stroke-linejoin="round"/>
<path d="M0.0 712.6 L26.4 715.2 L52.8 723.2 L79.2 736.4" fill="none" stroke="#fde3a8" stroke-width="1.8" stroke-linejoin="round"/>
<path d="M31.7 519.8 L79.2 525.1 L87.1 541.0 L92.4 572.7" fill="none" stroke="#fde3a8" stroke-width="1.8" stroke-linejoin="round"/>
<path d="M225.0 646.6 L264.6 630.7 L298.9 614.9 L330.6 583.2 L357.0 567.4 L394.0 554.2 L450.0 554.2" fill="none" stroke="#fde3a8" stroke-width="1.8" stroke-linejoin="round"/>
<path d="M225.0 525.1 L277.8 523.8 L317.4 519.8 L357.0 509.3" fill="none" stroke="#fde3a8" stroke-width="1.8" stroke-linejoin="round"/>
<path d="M246.1 504.0 L256.7 577.9 L267.2 609.6" fill="none" stroke="#fde3a8" stroke-width="1.8" stroke-linejoin="round"/>
<path d="M225.0 577.9 L291.0 572.7 L335.9 564.7" fill="none" stroke="#fde3a8" stroke-width="1.8" stroke-linejoin="round"/>
<path d="M357.0 504.0 L359.7 567.4" fill="none" stroke="#fde3a8" stroke-width="1.8" stroke-linejoin="round"/>
<path d="M378.2 504.0 L380.8 548.9" fill="none" stroke="#fde3a8" stroke-width="1.8" stroke-linejoin="round"/>
<path d="M304.2 543.6 L309.5 556.8 L343.8 551.5" fill="none" stroke="#fde3a8" stroke-width="1.8" stroke-linejoin="round"/>
<path d="M362.3 530.4 L450.0 525.1" fill="none" stroke="#fde3a8" stroke-width="1.8" stroke-linejoin="round"/>
<path d="M225.0 599.1 L285.7 596.4" fill="none" stroke="#fde3a8" stroke-width="1.8" stroke-linejoin="round"/>
<path d="M516.0 504.0 L518.7 530.4 L510.7 546.2 L489.6 554.2 L450.0 552.9" fill="none" stroke="#fde3a8" stroke-width="1.8" stroke-linejoin="round"/>
<path d="M450.0 519.8 L465.8 514.6 L484.3 525.1" fill="none" stroke="#fde3a8" stroke-width="1.8" stroke-linejoin="round"/>
<path d="M0.0 593.8 L15.8 593.8 L34.3 596.4 L47.5 609.6 L50.2 625.5 L47.5 630.7 L26.4 630.7 L10.6 628.1" fill="none" stroke="#fde3a8" stroke-width="1.8" stroke-linejoin="round"/>
<path d="M110.9 556.8 L137.3 552.9 L184.8 551.5 L225.0 546.2" fill="none" stroke="#fde3a8" stroke-width="1.8" stroke-linejoin="round"/>
<path d="M0.0 641.3 L15.8 641.3 L26.4 651.9" fill="none" stroke="#fde3a8" stroke-width="1.8" stroke-linejoin="round"/>
<path d="M0.0 662.4 L15.8 662.4 L21.1 688.8 L15.8 715.2 L7.9 755.9" fill="none" stroke="#fde3a8" stroke-width="1.8" stroke-linejoin="round"/>
<path d="M105.6 673.0 L110.9 694.1 L110.9 715.2" fill="none" stroke="#fde3a8" stroke-width="1.8" stroke-linejoin="round"/>
<path d="M52.8 651.9 L66.0 667.7" fill="none" stroke="#fde3a8" stroke-width="1.8" stroke-linejoin="round"/>
<path d="M79.2 567.4 L87.1 583.2 L89.8 609.6" fill="none" stroke="#fde3a8" stroke-width="1.8" stroke-linejoin="round"/>
<path d="M0.0 736.4 L26.4 741.7 L52.8 736.4" fill="none" stroke="#fde3a8" stroke-width="1.8" stroke-linejoin="round"/>
<path d="M147.9 583.2 L158.4 614.9 L169.0 641.3" fill="none" stroke="#fde3a8" stroke-width="1.8" stroke-linejoin="round"/>
<path d="M184.8 609.6 L225.0 604.3" fill="none" stroke="#fde3a8" stroke-width="1.8" stroke-linejoin="round"/>
<path d="M52.8 504.0 L60.7 519.8" fill="none" stroke="#fde3a8" stroke-width="1.8" stroke-linejoin="round"/>
<path d="M0.0 278.4 L15.8 278.4 L31.7 294.2 L52.8 302.2" fill="none" stroke="#fde3a8" stroke-width="1.8" stroke-linejoin="round"/>
<path d="M110.9 252.0 L113.5 283.7 L110.9 315.4 L113.5 331.2 L116.2 362.9 L113.5 399.9" fill="none" stroke="#fde3a8" stroke-width="1.8" stroke-linejoin="round"/>
<path d="M126.7 267.8 L158.4 278.4 L184.8 267.8 L211.2 278.4" fill="none" stroke="#fde3a8" stroke-width="1.8" stroke-linejoin="round"/>
<path d="M171.6 299.5 L198.0 299.5 L225.0 296.9" fill="none" stroke="#fde3a8" stroke-width="1.8" stroke-linejoin="round"/>
<path d="M174.3 357.6 L225.0 362.9" fill="none" stroke="#fde3a8" stroke-width="1.8" stroke-linejoin="round"/>
<path d="M0.0 415.7 L21.1 410.4 L31.7 399.9" fill="none" stroke="#fde3a8" stroke-width="1.8" stroke-linejoin="round"/>
<path d="M71.3 479.1 L84.5 503.9" fill="none" stroke="#fde3a8" stroke-width="1.8" stroke-linejoin="round"/>
<path d="M126.7 473.8 L225.0 471.2" fill="none" stroke="#fde3a8" stroke-width="1.8" stroke-linejoin="round"/>
<path d="M89.8 399.9 L105.6 405.2 L116.2 399.9" fill="none" stroke="#fde3a8" stroke-width="1.8" stroke-linejoin="round"/>
<path d="M0.0 331.2 L26.4 333.9 L52.8 331.2" fill="none" stroke="#fde3a8" stroke-width="1.8" stroke-linejoin="round"/>
<path d="M137.3 399.9 L158.4 410.4 L184.8 394.6" fill="none" stroke="#fde3a8" stroke-width="1.8" stroke-linejoin="round"/>
<path d="M211.2 252.0 L216.5 283.7 L225.0 289.0" fill="none" stroke="#fde3a8" stroke-width="1.8" stroke-linejoin="round"/>
<path d="M0.0 405.2 L15.8 399.9" fill="none" stroke="#fde3a8" stroke-width="1.8" stroke-linejoin="round"/>
<path d="M0.0 147.9 L15.8 163.7 L26.4 184.8" fill="none" stroke="#fde3a8" stroke-width="1.8" stroke-linejoin="round"/>
<path d="M100.3 216.5 L126.7 232.4 L147.9 229.7" fill="none" stroke="#fde3a8" stroke-width="1.8" stroke-linejoin="round"/>
<path d="M184.8 190.1 L200.7 211.2 L225.0 206.0" fill="none" stroke="#fde3a8" stroke-width="1.8" stroke-linejoin="round"/>
<path d="M0.0 34.3 L26.4 52.8 L47.5 79.2" fill="none" stroke="#fde3a8" stroke-width="1.8" stroke-linejoin="round"/>
<path d="M52.8 113.5 L79.2 110.9 L105.6 116.2" fill="none" stroke="#fde3a8" stroke-width="1.8" stroke-linejoin="round"/>
<path d="M225.0 614.9 L251.4 620.2 L277.8 614.9" fill="none" stroke="#fde3a8" stroke-width="1.8" stroke-linejoin="round"/>
<path d="M304.2 530.4 L335.9 527.8 L372.9 525.1" fill="none" stroke="#fde3a8" stroke-width="1.8" stroke-linejoin="round"/>
<path d="M409.8 519.8 L425.7 530.4 L450.0 527.8" fill="none" stroke="#fde3a8" stroke-width="1.8" stroke-linejoin="round"/>
<path d="M272.5 504.0 L275.2 525.1 L277.8 535.7" fill="none" stroke="#fde3a8" stroke-width="1.8" stroke-linejoin="round"/>
<path d="M372.9 551.5 L383.4 562.1" fill="none" stroke="#fde3a8" stroke-width="1.8" stroke-linejoin="round"/>
<path d="M225.0 588.5 L251.4 583.2 L264.6 588.5" fill="none" stroke="#fde3a8" stroke-width="1.8" stroke-linejoin="round"/>
<path d="M225.0 257.3 L240.8 252.0" fill="none" stroke="#fde3a8" stroke-width="1.8" stroke-linejoin="round"/>
<path d="M225.0 331.2 L251.4 320.7 L267.2 304.8" fill="none" stroke="#fde3a8" stroke-width="1.8" stroke-linejoin="round"/>
<path d="M230.3 410.4 L235.6 436.8 L225.0 452.7" fill="none" stroke="#fde3a8" stroke-width="1.8" stroke-linejoin="round"/>
<path d="M264.6 442.1 L277.8 463.2 L291.0 503.9" fill="none" stroke="#fde3a8" stroke-width="1.8" stroke-linejoin="round"/>
<path d="M225.0 484.4 L251.4 489.7" fill="none" stroke="#fde3a8" stroke-width="1.8" stroke-linejoin="round"/>
<path d="M357.0 252.0 L362.3 273.1 L351.7 294.2" fill="none" stroke="#fde3a8" stroke-width="1.8" stroke-linejoin="round"/>
<path d="M0.0 110.9 L15.8 126.7 L52.8 142.6 L79.2 158.4 L100.3 171.6 L126.7 176.9 L158.4 176.9 L184.8 174.3 L219.2 169.0" fill="none" stroke="#b4b4b4" stroke-width="1.6" stroke-dasharray="5 3"/>
<path d="M171.6 176.9 L198.0 200.7 L225.0 237.7" fill="none" stroke="#b4b4b4" stroke-width="1.6" stroke-dasharray="5 3"/>
<path d="M277.8 35.6 L304.2 42.2 L357.0 47.5 L396.6 55.5 L425.7 63.4 L433.6 47.5 L433.6 0.0" fill="none" stroke="#b4b4b4" stroke-width="1.6" stroke-dasharray="5 3"/>
<path d="M0.0 320.7 L39.6 308.8 L79.2 303.5 L110.9 310.1 L147.9 323.3 L184.8 331.2 L225.0 341.8" fill="none" stroke="#b4b4b4" stroke-width="1.6" stroke-dasharray="5 3"/>
<path d="M225.0 257.3 L200.7 273.1 L182.2 318.0" fill="none" stroke="#b4b4b4" stroke-width="1.6" stroke-dasharray="5 3"/>
<path d="M26.4 463.2 L79.2 460.6 L110.9 468.5 L132.0 481.7 L158.4 500.2" fill="none" stroke="#b4b4b4" stroke-width="1.6" stroke-dasharray="5 3"/>
<path d="M225.0 341.8 L264.6 352.3 L304.2 362.9 L330.6 368.2" fill="none" stroke="#b4b4b4" stroke-width="1.6" stroke-dasharray="5 3"/>
<path d="M317.4 273.1 L335.9 304.8 L341.2 339.1" fill="none" stroke="#b4b4b4" stroke-width="1.6" stroke-dasharray="5 3"/>
<path d="M225.0 500.2 L251.4 484.4 L285.7 452.7 L304.2 423.6" fill="none" stroke="#b4b4b4" stroke-width="1.6" stroke-dasharray="5 3"/>
<path d="M0.0 667.7 L15.8 657.2 L52.8 636.0 L87.1 609.6 L118.8 583.2 L145.2 562.1 L171.6 546.2 L225.0 514.6" fill="none" stroke="#b4b4b4" stroke-width="1.6" stroke-dasharray="5 3"/>
<path d="M5.3 667.7 L15.8 694.1 L0.0 720.5" fill="none" stroke="#b4b4b4" stroke-width="1.6" stroke-dasharray="5 3"/>
<path d="M26.4 596.4 L39.6 588.5 L79.2 572.7 L110.9 559.5 L132.0 551.5" fill="none" stroke="#b4b4b4" stroke-width="1.6" stroke-dasharray="5 3"/>
<path d="M399.3 552.9 L450.0 550.2" fill="none" stroke="#b4b4b4" stroke-width="1.6" stroke-dasharray="5 3"/>
<path d="M291.0 583.2 L317.4 591.1 L322.7 604.3 L343.8 593.8" fill="none" stroke="#b4b4b4" stroke-width="1.6" stroke-dasharray="5 3"/>
<path d="M450.0 550.2 L497.5 547.6 L508.1 556.8" fill="none" stroke="#b4b4b4" stroke-width="1.6" stroke-dasharray="5 3"/>
<path d="M0.0 149.2 L37.0 149.2 L52.8 141.3 L76.6 128.1" fill="none" stroke="#fcd372" stroke-width="2.6" stroke-linejoin="round"/>
<path d="M0.0 179.6 L37.0 182.2 L42.2 169.0 L39.6 158.4" fill="none" stroke="#fcd372" stroke-width="2.6" stroke-linejoin="round"/>
<path d="M121.5 35.6 L121.5 63.4" fill="none" stroke="#fcd372" stroke-width="2.6" stroke-linejoin="round"/>
<path d="M31.7 182.2 L34.3 200.7 L39.6 221.8" fill="none" stroke="#fcd372" stroke-width="2.6" stroke-linejoin="round"/>
<path d="M99.0 318.0 L99.0 286.3 L104.3 282.4 L134.7 282.4 L138.6 289.0 L137.3 312.7 L141.3 328.6" fill="none" stroke="#fcd372" stroke-width="2.6" stroke-linejoin="round"/>
<path d="M0.0 304.8 L29.0 306.1 L56.8 303.5" fill="none" stroke="#fcd372" stroke-width="2.6" stroke-linejoin="round"/>
<path d="M31.7 312.7 L34.3 357.6 L29.0 389.3 L21.1 421.0 L15.8 452.7" fill="none" stroke="#fcd372" stroke-width="2.6" stroke-linejoin="round"/>
<path d="M0.0 452.7 L63.4 456.6" fill="none" stroke="#fcd372" stroke-width="2.6" stroke-linejoin="round"/>
<path d="M176.9 405.2 L225.0 405.2" fill="none" stroke="#fcd372" stroke-width="2.6" stroke-linejoin="round"/>
<path d="M0.0 376.1 L31.7 362.9" fill="none" stroke="#fcd372" stroke-width="2.6" stroke-linejoin="round"/>
<path d="M322.7 315.4 L335.9 362.9 L349.1 376.1" fill="none" stroke="#fcd372" stroke-width="2.6" stroke-linejoin="round"/>
<path d="M256.7 331.2 L312.1 355.0" fill="none" stroke="#fcd372" stroke-width="2.6" stroke-linejoin="round"/>
<path d="M277.8 405.2 L312.1 389.3" fill="none" stroke="#fcd372" stroke-width="2.6" stroke-linejoin="round"/>
<path d="M396.6 370.8 L450.0 362.9" fill="none" stroke="#fcd372" stroke-width="2.6" stroke-linejoin="round"/>
<path d="M394.0 392.0 L450.0 389.3" fill="none" stroke="#fcd372" stroke-width="2.6" stroke-linejoin="round"/>
<path d="M351.7 415.7 L335.9 450.0 L338.5 503.9" fill="none" stroke="#fcd372" stroke-width="2.6" stroke-linejoin="round"/>
<path d="M380.8 410.4 L386.1 436.8" fill="none" stroke="#fcd372" stroke-width="2.6" stroke-linejoin="round"/>
<path d="M251.4 318.0 L267.2 339.1 L277.8 370.8 L291.0 421.0 L304.2 463.2 L314.8 503.9" fill="none" stroke="#fcd372" stroke-width="2.6" stroke-linejoin="round"/>
<path d="M341.2 294.2 L349.1 315.4 L343.8 339.1" fill="none" stroke="#fcd372" stroke-width="2.6" stroke-linejoin="round"/>
<path d="M367.6 339.1 L372.9 318.0 L362.3 304.8" fill="none" stroke="#fcd372" stroke-width="2.6" stroke-linejoin="round"/>
<path d="M288.4 368.2 L312.1 373.5" fill="none" stroke="#fcd372" stroke-width="2.6" stroke-linejoin="round"/>
<path d="M450.0 389.3 L463.2 389.3 L468.5 397.2" fill="none" stroke="#fcd372" stroke-width="2.6" stroke-linejoin="round"/>
<path d="M34.3 604.3 L47.5 609.6 L50.2 625.5" fill="none" stroke="#fcd372" stroke-width="2.6" stroke-linejoin="round"/>
<path d="M129.4 35.6 L130.7 66.0 L134.7 89.8 L130.7 110.9 L121.5 126.7 L110.9 147.9 L100.3 163.7 L84.5 179.6 L66.0 198.0 L47.5 216.5 L31.7 232.4 L18.5 251.9" fill="none" stroke="#f8ad66" stroke-width="3" stroke-linejoin="round" stroke-linecap="round"/>
<path d="M0.0 105.6 L15.8 113.5 L31.7 122.8 L52.8 132.0 L71.3 141.3 L87.1 149.2 L105.6 157.1 L124.1 169.0 L142.6 182.2 L158.4 192.8 L169.0 200.7 L182.2 219.2 L195.4 251.9" fill="none" stroke="#f8ad66" stroke-width="3" stroke-linejoin="round" stroke-linecap="round"/>
<path d="M91.1 171.6 L92.4 184.8 L89.8 206.0 L87.1 227.1 L85.8 251.9" fill="none" stroke="#f8ad66" stroke-width="3" stroke-linejoin="round" stroke-linecap="round"/>
<path d="M158.4 192.8 L179.6 184.8 L203.3 179.6 L219.2 167.7" fill="none" stroke="#f8ad66" stroke-width="3" stroke-linejoin="round" stroke-linecap="round"/>
<path d="M0.0 241.6 L34.3 239.0 L66.0 244.3 L89.8 249.5 L121.5 248.2 L147.9 251.9" fill="none" stroke="#f8ad66" stroke-width="3" stroke-linejoin="round" stroke-linecap="round"/>
<path d="M147.9 251.9 L171.6 239.0 L200.7 229.7 L225.0 220.5" fill="none" stroke="#f8ad66" stroke-width="3" stroke-linejoin="round" stroke-linecap="round"/>
<path d="M404.6 0.0 L415.1 21.1 L417.8 48.9 L436.2 58.1 L445.5 71.3 L441.5 95.1 L431.0 116.2 L423.0 134.7 L419.1 158.4 L425.7 171.6 L450.0 184.8" fill="none" stroke="#f8ad66" stroke-width="3" stroke-linejoin="round" stroke-linecap="round"/>
<path d="M349.1 34.3 L383.4 42.2 L417.8 48.9" fill="none" stroke="#f8ad66" stroke-width="3" stroke-linejoin="round" stroke-linecap="round"/>
<path d="M230.3 34.3 L232.9 50.2" fill="none" stroke="#f8ad66" stroke-width="3" stroke-linejoin="round" stroke-linecap="round"/>
<path d="M450.0 182.2 L465.8 192.8 L489.6 203.3 L493.6 213.9 L487.0 232.4 L473.8 251.9" fill="none" stroke="#f8ad66" stroke-width="3" stroke-linejoin="round" stroke-linecap="round"/>
<path d="M85.8 252.0 L81.9 278.4 L77.9 299.5 L76.6 320.7 L73.9 341.8 L67.3 362.9 L66.0 384.0 L63.4 399.9 L58.1 415.7 L54.1 436.8 L55.5 463.2 L56.8 503.9" fill="none" stroke="#f8ad66" stroke-width="3" stroke-linejoin="round" stroke-linecap="round"/>
<path d="M18.5 252.0 L10.6 267.8 L0.0 286.3" fill="none" stroke="#f8ad66" stroke-width="3" stroke-linejoin="round" stroke-linecap="round"/>
<path d="M0.0 315.4 L26.4 310.1 L63.4 312.7 L100.3 319.3 L126.7 324.6 L147.9 327.3 L171.6 336.5 L190.1 344.4 L203.3 357.6 L213.9 365.5 L225.0 368.2" fill="none" stroke="#f8ad66" stroke-width="3" stroke-linejoin="round" stroke-linecap="round"/>
<path d="M0.0 384.0 L26.4 376.1 L52.8 365.5 L79.2 370.8 L116.2 382.7 L147.9 381.4 L174.3 378.7 L225.0 382.7" fill="none" stroke="#f8ad66" stroke-width="3" stroke-linejoin="round" stroke-linecap="round"/>
<path d="M225.0 318.0 L206.0 328.6 L196.7 336.5 L195.4 370.8 L196.7 410.4 L190.1 431.6 L187.5 450.0 L192.8 476.5 L198.0 503.9" fill="none" stroke="#f8ad66" stroke-width="3" stroke-linejoin="round" stroke-linecap="round"/>
<path d="M198.0 267.8 L211.2 283.7 L225.0 304.8" fill="none" stroke="#f8ad66" stroke-width="3" stroke-linejoin="round" stroke-linecap="round"/>
<path d="M0.0 471.2 L52.8 471.2 L84.5 465.9 L105.6 460.6 L132.0 452.7 L158.4 444.8 L184.8 431.6 L211.2 421.0 L225.0 418.4" fill="none" stroke="#f8ad66" stroke-width="3" stroke-linejoin="round" stroke-linecap="round"/>
<path d="M179.6 503.9 L198.0 489.7 L225.0 481.7" fill="none" stroke="#f8ad66" stroke-width="3" stroke-linejoin="round" stroke-linecap="round"/>
<path d="M225.0 315.4 L256.7 304.8 L293.7 294.2 L325.3 289.0" fill="none" stroke="#f8ad66" stroke-width="3" stroke-linejoin="round" stroke-linecap="round"/>
<path d="M267.2 267.8 L275.2 286.3 L280.5 304.8 L288.4 325.9 L288.4 357.6 L285.7 378.7 L288.4 407.8 L296.3 421.0 L304.2 434.2 L312.1 452.7 L320.1 476.5 L325.3 503.9" fill="none" stroke="#f8ad66" stroke-width="3" stroke-linejoin="round" stroke-linecap="round"/>
<path d="M225.0 365.5 L251.4 365.5 L288.4 368.2 L304.2 368.2" fill="none" stroke="#f8ad66" stroke-width="3" stroke-linejoin="round" stroke-linecap="round"/>
<path d="M225.0 415.7 L259.3 413.1 L277.8 405.2 L293.7 399.9" fill="none" stroke="#f8ad66" stroke-width="3" stroke-linejoin="round" stroke-linecap="round"/>
<path d="M317.4 431.6 L357.0 426.3 L396.6 418.4 L423.0 413.1 L450.0 407.8" fill="none" stroke="#f8ad66" stroke-width="3" stroke-linejoin="round" stroke-linecap="round"/>
<path d="M225.0 500.2 L259.3 481.7 L293.7 471.2 L328.0 468.5 L365.0 463.2 L394.0 452.7 L423.0 447.4 L450.0 446.1" fill="none" stroke="#f8ad66" stroke-width="3" stroke-linejoin="round" stroke-linecap="round"/>
<path d="M413.0 339.1 L428.3 339.1 L450.0 365.5" fill="none" stroke="#f8ad66" stroke-width="3" stroke-linejoin="round" stroke-linecap="round"/>
<path d="M428.3 339.1 L436.2 318.0 L450.0 289.0" fill="none" stroke="#f8ad66" stroke-width="3" stroke-linejoin="round" stroke-linecap="round"/>
<path d="M240.8 323.3 L235.6 357.6 L238.2 384.0 L246.1 410.4 L259.3 436.8 L262.0 463.2 L264.6 503.9" fill="none" stroke="#f8ad66" stroke-width="3" stroke-linejoin="round" stroke-linecap="round"/>
<path d="M391.4 421.0 L396.6 450.0 L401.9 484.4 L404.6 503.9" fill="none" stroke="#f8ad66" stroke-width="3" stroke-linejoin="round" stroke-linecap="round"/>
<path d="M463.2 266.5 L450.0 289.0" fill="none" stroke="#f8ad66" stroke-width="3" stroke-linejoin="round" stroke-linecap="round"/>
<path d="M450.0 376.1 L460.6 397.2 L468.5 421.0 L473.8 442.1 L475.1 503.9" fill="none" stroke="#f8ad66" stroke-width="3" stroke-linejoin="round" stroke-linecap="round"/>
<path d="M450.0 402.5 L465.8 399.9 L476.4 407.8 L489.6 436.8 L475.1 442.1 L450.0 446.1" fill="none" stroke="#f8ad66" stroke-width="3" stroke-linejoin="round" stroke-linecap="round"/>
<path d="M56.8 504.0 L58.1 551.5 L68.7 572.7 L79.2 588.5 L92.4 609.6 L103.0 625.5 L118.8 641.3 L126.7 657.2 L132.0 678.3 L142.6 699.4 L155.8 720.5 L169.0 741.7 L176.9 755.9" fill="none" stroke="#f8ad66" stroke-width="3" stroke-linejoin="round" stroke-linecap="round"/>
<path d="M0.0 575.3 L26.4 567.4 L58.1 551.5 L87.1 538.3 L110.9 527.8 L137.3 519.8 L158.4 514.6 L179.6 504.0" fill="none" stroke="#f8ad66" stroke-width="3" stroke-linejoin="round" stroke-linecap="round"/>
<path d="M179.6 504.0 L169.0 530.4 L153.2 551.5 L132.0 572.7 L110.9 596.4 L87.1 617.5 L66.0 636.0 L39.6 657.2 L21.1 667.7 L0.0 678.3" fill="none" stroke="#f8ad66" stroke-width="3" stroke-linejoin="round" stroke-linecap="round"/>
<path d="M0.0 630.7 L21.1 651.9 L39.6 667.7 L73.9 675.6 L105.6 679.6 L132.0 680.9" fill="none" stroke="#f8ad66" stroke-width="3" stroke-linejoin="round" stroke-linecap="round"/>
<path d="M132.0 680.9 L158.4 662.4 L184.8 651.9 L225.0 638.7" fill="none" stroke="#f8ad66" stroke-width="3" stroke-linejoin="round" stroke-linecap="round"/>
<path d="M132.0 680.9 L110.9 696.8 L89.8 720.5 L68.7 755.9" fill="none" stroke="#f8ad66" stroke-width="3" stroke-linejoin="round" stroke-linecap="round"/>
<path d="M71.3 675.6 L79.2 704.7 L87.1 725.8" fill="none" stroke="#f8ad66" stroke-width="3" stroke-linejoin="round" stroke-linecap="round"/>
<path d="M23.8 657.2 L23.8 688.8 L26.4 728.5 L29.0 755.9" fill="none" stroke="#f8ad66" stroke-width="3" stroke-linejoin="round" stroke-linecap="round"/>
<path d="M203.3 504.0 L211.2 522.5 L225.0 541.0" fill="none" stroke="#f8ad66" stroke-width="3" stroke-linejoin="round" stroke-linecap="round"/>
<path d="M132.0 568.7 L150.5 571.3 L171.6 564.7 L198.0 556.8 L225.0 552.9" fill="none" stroke="#f8ad66" stroke-width="3" stroke-linejoin="round" stroke-linecap="round"/>
<path d="M225.0 641.3 L251.4 628.1 L291.0 593.8 L317.4 585.9 L343.8 570.0 L346.5 543.6 L335.9 519.8 L330.6 504.0" fill="none" stroke="#f8ad66" stroke-width="3" stroke-linejoin="round" stroke-linecap="round"/>
<path d="M262.0 504.0 L267.2 525.1 L277.8 546.2 L283.1 564.7 L291.0 593.8" fill="none" stroke="#f8ad66" stroke-width="3" stroke-linejoin="round" stroke-linecap="round"/>
<path d="M225.0 551.5 L246.1 551.5 L267.2 558.1 L304.2 551.5 L343.8 543.6 L370.2 538.3 L394.0 539.6 L409.8 542.3 L436.2 535.7 L450.0 535.7" fill="none" stroke="#f8ad66" stroke-width="3" stroke-linejoin="round" stroke-linecap="round"/>
<path d="M399.3 504.0 L401.9 525.1 L396.6 546.2 L391.4 554.2" fill="none" stroke="#f8ad66" stroke-width="3" stroke-linejoin="round" stroke-linecap="round"/>
<path d="M225.0 543.6 L230.3 570.0 L238.2 596.4 L254.0 625.5" fill="none" stroke="#f8ad66" stroke-width="3" stroke-linejoin="round" stroke-linecap="round"/>
<path d="M431.0 504.0 L450.0 514.6" fill="none" stroke="#f8ad66" stroke-width="3" stroke-linejoin="round" stroke-linecap="round"/>
<path d="M450.0 511.9 L465.8 522.5 L481.7 535.7 L502.8 542.3 L529.2 567.4 L542.4 591.1 L555.6 620.2 L558.3 644.0 L571.5 665.1 L587.3 673.0 L603.2 684.9" fill="none" stroke="#f8ad66" stroke-width="3" stroke-linejoin="round" stroke-linecap="round"/>
<path d="M473.8 504.0 L475.1 517.2 L465.8 533.0 L450.0 535.7" fill="none" stroke="#f8ad66" stroke-width="3" stroke-linejoin="round" stroke-linecap="round"/>
<path d="M291.8 302.0 L300.2 322.1 L308.6 343.9" fill="none" stroke="#fde3a8" stroke-width="1.8"/>
<path d="M308.6 302.0 L316.9 327.2" fill="none" stroke="#fde3a8" stroke-width="1.8"/>
<path d="M275.0 315.4 L300.2 312.1 L325.3 308.7" fill="none" stroke="#fde3a8" stroke-width="1.8"/>
<path d="M275.0 357.4 L300.2 357.4 L316.9 352.3" fill="none" stroke="#fde3a8" stroke-width="1.8"/>
<path d="M352.2 322.1 L362.2 332.2" fill="none" stroke="#fde3a8" stroke-width="1.8"/>
<path d="M375.7 318.8 L382.4 335.6 L392.4 345.6 L402.5 352.3" fill="none" stroke="#fde3a8" stroke-width="1.8"/>
<path d="M385.7 318.8 L395.8 338.9" fill="none" stroke="#fde3a8" stroke-width="1.8"/>
<path d="M375.7 345.6 L392.4 350.7 L409.2 352.3" fill="none" stroke="#fde3a8" stroke-width="1.8"/>
<path d="M355.5 352.3 L362.2 369.1 L369.0 379.2" fill="none" stroke="#fde3a8" stroke-width="1.8"/>
<path d="M325.3 369.1 L342.1 372.5 L358.9 369.1" fill="none" stroke="#fde3a8" stroke-width="1.8"/>
<path d="M316.9 380.9 L335.4 380.9" fill="none" stroke="#fde3a8" stroke-width="1.8"/>
<path d="M300.2 385.9 L275.0 389.2" fill="none" stroke="#fde3a8" stroke-width="1.8"/>
<path d="M342.1 406.0 L362.2 402.7 L379.0 406.0" fill="none" stroke="#fde3a8" stroke-width="1.8"/>
<path d="M358.9 396.0 L365.6 419.4 L369.0 462.1" fill="none" stroke="#fde3a8" stroke-width="1.8"/>
<path d="M375.7 402.7 L382.4 436.2 L385.7 462.1" fill="none" stroke="#fde3a8" stroke-width="1.8"/>
<path d="M325.3 411.1 L328.7 436.2 L332.0 462.1" fill="none" stroke="#fde3a8" stroke-width="1.8"/>
<path d="M275.0 432.9 L295.1 429.5" fill="none" stroke="#fde3a8" stroke-width="1.8"/>
<path d="M392.4 396.0 L425.0 392.6" fill="none" stroke="#fde3a8" stroke-width="1.8"/>
<path d="M389.1 402.7 L425.0 402.7" fill="none" stroke="#fde3a8" stroke-width="1.8"/>
<path d="M392.4 432.9 L425.0 429.5" fill="none" stroke="#fde3a8" stroke-width="1.8"/>
<path d="M325.3 446.3 L358.9 442.9 L392.4 441.3 L425.0 439.6" fill="none" stroke="#fde3a8" stroke-width="1.8"/>
<path d="M395.8 419.4 L402.5 462.1" fill="none" stroke="#fde3a8" stroke-width="1.8"/>
<path d="M402.5 322.1 L425.0 318.8" fill="none" stroke="#fde3a8" stroke-width="1.8"/>
<path d="M291.8 335.6 L296.8 352.3" fill="none" stroke="#fde3a8" stroke-width="1.8"/>
<path d="M301.8 357.4 L318.6 362.4" fill="none" stroke="#fde3a8" stroke-width="1.8"/>
<path d="M369.0 365.8 L389.1 372.5" fill="none" stroke="#fde3a8" stroke-width="1.8"/>
<path d="M355.5 325.5 L365.6 318.8" fill="none" stroke="#fde3a8" stroke-width="1.8"/>
<path d="M330.4 350.7 L345.5 346.5 L358.9 349.0 L366.4 355.7 L372.3 365.8 L379.0 374.1 L382.4 384.2 L379.0 392.6 L369.0 396.0 L353.9 389.2 L345.5 390.9 L330.4 399.3 L320.3 404.3 L313.6 396.0 L310.2 382.5 L313.6 369.1 L323.7 355.7 L330.4 350.7" fill="none" stroke="#fcd372" stroke-width="2.4" stroke-linejoin="round"/>
<path d="M296.8 375.8 L305.2 350.7 L320.3 343.9 L342.1 340.6 L366.4 338.1 L392.4 339.8 L410.9 340.6" fill="none" stroke="#fcd372" stroke-width="2.4" stroke-linejoin="round"/>
<path d="M322.0 312.1 L325.3 335.6 L330.4 350.7 L335.4 365.8 L338.8 385.9 L342.1 406.0 L345.5 429.5 L348.8 462.1" fill="none" stroke="#fcd372" stroke-width="2.4" stroke-linejoin="round"/>
<path d="M275.0 342.3 L308.6 344.8 L325.3 345.6 L345.5 346.5" fill="none" stroke="#fcd372" stroke-width="2.4" stroke-linejoin="round"/>
<path d="M275.0 417.8 L291.8 411.1 L316.9 401.0 L330.4 399.3" fill="none" stroke="#fcd372" stroke-width="2.4" stroke-linejoin="round"/>
<path d="M353.9 389.2 L369.0 393.4 L392.4 385.9 L425.0 375.8" fill="none" stroke="#fcd372" stroke-width="2.4" stroke-linejoin="round"/>
<path d="M347.1 305.4 L348.8 318.8 L343.8 330.5 L342.1 347.3" fill="none" stroke="#fcd372" stroke-width="2.4" stroke-linejoin="round"/>
<path d="M350.5 315.4 L369.0 325.5 L370.6 337.2 L379.0 352.3 L392.4 369.1 L402.5 380.9 L409.2 396.0 L414.3 422.8" fill="none" stroke="#fcd372" stroke-width="2.4" stroke-linejoin="round"/>
<path d="M365.6 355.7 L392.4 364.1 L425.0 359.0" fill="none" stroke="#fcd372" stroke-width="2.4" stroke-linejoin="round"/>
<path d="M382.4 384.2 L392.4 385.9 L405.9 382.5 L425.0 377.5" fill="none" stroke="#fcd372" stroke-width="2.4" stroke-linejoin="round"/>
<path d="M379.0 392.6 L385.7 411.1 L392.4 419.4" fill="none" stroke="#fcd372" stroke-width="2.4" stroke-linejoin="round"/>
<path d="M275.0 365.8 L295.1 369.1 L310.2 375.8" fill="none" stroke="#fcd372" stroke-width="2.4" stroke-linejoin="round"/>
<path d="M296.8 375.8 L301.8 396.0 L308.6 416.1 L316.9 436.2 L322.0 462.1" fill="none" stroke="#fcd372" stroke-width="2.4" stroke-linejoin="round"/>
<path d="M313.6 396.0 L318.6 409.4 L311.9 422.8 L305.2 429.5" fill="none" stroke="#fcd372" stroke-width="2.4" stroke-linejoin="round"/>
<path d="M275.0 402.7 L295.1 397.6 L313.6 396.0" fill="none" stroke="#fcd372" stroke-width="2.4" stroke-linejoin="round"/>
<path d="M392.4 339.8 L425.0 341.4" fill="none" stroke="#fcd372" stroke-width="2.4" stroke-linejoin="round"/>
<path d="M402.5 380.9 L402.5 402.7 L409.2 422.8 L414.3 429.5" fill="none" stroke="#fcd372" stroke-width="2.4" stroke-linejoin="round"/>
<path d="M288.4 325.5 L301.8 320.5 L325.3 312.1 L347.1 305.4 L369.0 307.0 L389.1 315.4 L410.9 335.6 L414.3 369.1 L414.3 402.7 L417.6 436.2 L421.0 462.1" fill="none" stroke="#f8ad66" stroke-width="2.8" stroke-linejoin="round"/>
<path d="M288.4 325.5 L288.4 352.3 L285.1 377.5 L288.4 396.0 L295.1 416.1 L305.2 436.2 L311.9 462.1" fill="none" stroke="#f8ad66" stroke-width="2.8" stroke-linejoin="round"/>
<path d="M318.6 431.2 L358.9 422.8 L392.4 417.8 L425.0 413.6" fill="none" stroke="#f8ad66" stroke-width="2.8" stroke-linejoin="round"/>
<path d="M275.0 327.2 L288.4 325.5" fill="none" stroke="#f8ad66" stroke-width="2.8" stroke-linejoin="round"/>
<path d="M537.0 206.4 L551.7 221.1 L560.5 235.7 L557.0 258.0 L545.0 232.0 Z" fill="#d3eedc"/>
<rect x="119.4" y="93.7" width="25.3" height="11.4" rx="1.5" fill="#4fc8aa" stroke="#fff" stroke-width="0.8"/>
<rect x="119.8" y="94.1" width="24.5" height="2" fill="#e9534e"/>
<text x="132.1" y="103.0" font-size="9" fill="#fff" text-anchor="middle" font-family="Liberation Sans, sans-serif">G15</text>
<rect x="14.5" y="118.0" width="33.0" height="11.4" rx="1.5" fill="#4fc8aa" stroke="#fff" stroke-width="0.8"/>
<rect x="14.9" y="118.4" width="32.2" height="2" fill="#e9534e"/>
<text x="31.0" y="127.3" font-size="9" fill="#fff" text-anchor="middle" font-family="Liberation Sans, sans-serif">G4221</text>
<rect x="77.4" y="118.8" width="29.0" height="11.4" rx="1.5" fill="#f3776b" stroke="#fff" stroke-width="0.8"/>
<text x="91.9" y="128.1" font-size="9" fill="#fff" text-anchor="middle" font-family="Liberation Sans, sans-serif">G346</text>
<rect x="70.0" y="140.0" width="32.5" height="11.3" rx="1.5" fill="#4fc8aa" stroke="#fff" stroke-width="0.8"/>
<rect x="70.4" y="140.4" width="31.7" height="2" fill="#e9534e"/>
<text x="86.2" y="149.2" font-size="9" fill="#fff" text-anchor="middle" font-family="Liberation Sans, sans-serif">G4221</text>
<rect x="123.3" y="173.0" width="25.4" height="11.0" rx="1.5" fill="#4fc8aa" stroke="#fff" stroke-width="0.8"/>
<rect x="123.7" y="173.4" width="24.6" height="2" fill="#e9534e"/>
<text x="136.0" y="182.1" font-size="9" fill="#fff" text-anchor="middle" font-family="Liberation Sans, sans-serif">G15</text>
<rect x="78.4" y="183.5" width="33.0" height="11.9" rx="1.5" fill="#4fc8aa" stroke="#fff" stroke-width="0.8"/>
<rect x="78.8" y="183.9" width="32.2" height="2" fill="#e9534e"/>
<text x="94.9" y="193.0" font-size="9" fill="#fff" text-anchor="middle" font-family="Liberation Sans, sans-serif">G1521</text>
<rect x="182.2" y="221.8" width="23.2" height="11.9" rx="1.5" fill="#4fc8aa" stroke="#fff" stroke-width="0.8"/>
<rect x="182.6" y="222.2" width="22.4" height="2" fill="#e3b531"/>
<text x="193.8" y="231.3" font-size="9" fill="#fff" text-anchor="middle" font-family="Liberation Sans, sans-serif">S81</text>
<rect x="92.8" y="244.8" width="22.6" height="10.0" rx="1.5" fill="#4fc8aa" stroke="#fff" stroke-width="0.8"/>
<rect x="93.2" y="245.2" width="21.8" height="2" fill="#e3b531"/>
<text x="104.1" y="253.4" font-size="9" fill="#fff" text-anchor="middle" font-family="Liberation Sans, sans-serif">S48</text>
<rect x="124.6" y="240.8" width="22.7" height="10.8" rx="1.5" fill="#4fc8aa" stroke="#fff" stroke-width="0.8"/>
<rect x="125.0" y="241.2" width="21.9" height="2" fill="#e3b531"/>
<text x="135.9" y="249.8" font-size="9" fill="#fff" text-anchor="middle" font-family="Liberation Sans, sans-serif">S48</text>
<rect x="200.7" y="299.5" width="29.3" height="11.9" rx="1.5" fill="#f3776b" stroke="#fff" stroke-width="0.8"/>
<text x="215.4" y="309.1" font-size="9" fill="#fff" text-anchor="middle" font-family="Liberation Sans, sans-serif">G204</text>
<rect x="63.4" y="308.0" width="31.6" height="11.3" rx="1.5" fill="#4fc8aa" stroke="#fff" stroke-width="0.8"/>
<rect x="63.8" y="308.4" width="30.8" height="2" fill="#e9534e"/>
<text x="79.2" y="317.2" font-size="9" fill="#fff" text-anchor="middle" font-family="Liberation Sans, sans-serif">G1521</text>
<rect x="149.7" y="322.8" width="20.1" height="11.1" rx="1.5" fill="#4fc8aa" stroke="#fff" stroke-width="0.8"/>
<rect x="150.1" y="323.2" width="19.3" height="2" fill="#e9534e"/>
<text x="159.8" y="332.0" font-size="9" fill="#fff" text-anchor="middle" font-family="Liberation Sans, sans-serif">G2</text>
<rect x="122.0" y="378.2" width="22.2" height="11.1" rx="1.5" fill="#4fc8aa" stroke="#fff" stroke-width="0.8"/>
<rect x="122.4" y="378.6" width="21.4" height="2" fill="#e3b531"/>
<text x="133.1" y="387.4" font-size="9" fill="#fff" text-anchor="middle" font-family="Liberation Sans, sans-serif">S58</text>
<rect x="161.0" y="373.0" width="22.0" height="11.0" rx="1.5" fill="#4fc8aa" stroke="#fff" stroke-width="0.8"/>
<rect x="161.4" y="373.4" width="21.2" height="2" fill="#e3b531"/>
<text x="172.0" y="382.1" font-size="9" fill="#fff" text-anchor="middle" font-family="Liberation Sans, sans-serif">S26</text>
<rect x="186.2" y="378.2" width="21.8" height="11.1" rx="1.5" fill="#4fc8aa" stroke="#fff" stroke-width="0.8"/>
<rect x="186.6" y="378.6" width="21.0" height="2" fill="#e3b531"/>
<text x="197.1" y="387.4" font-size="9" fill="#fff" text-anchor="middle" font-family="Liberation Sans, sans-serif">S26</text>
<rect x="-3.0" y="377.4" width="13.6" height="10.6" rx="1.5" fill="#4fc8aa" stroke="#fff" stroke-width="0.8"/>
<rect x="-2.6" y="377.8" width="12.8" height="2" fill="#e3b531"/>
<text x="3.8" y="386.3" font-size="9" fill="#fff" text-anchor="middle" font-family="Liberation Sans, sans-serif">S58</text>
<rect x="7.0" y="465.4" width="18.6" height="11.1" rx="1.5" fill="#4fc8aa" stroke="#fff" stroke-width="0.8"/>
<rect x="7.4" y="465.8" width="17.8" height="2" fill="#e9534e"/>
<text x="16.3" y="474.6" font-size="9" fill="#fff" text-anchor="middle" font-family="Liberation Sans, sans-serif">G50</text>
<rect x="26.0" y="465.4" width="24.2" height="11.6" rx="1.5" fill="#4fc8aa" stroke="#fff" stroke-width="0.8"/>
<rect x="26.4" y="465.8" width="23.4" height="2" fill="#e9534e"/>
<text x="38.1" y="474.8" font-size="9" fill="#fff" text-anchor="middle" font-family="Liberation Sans, sans-serif">G50</text>
<rect x="85.0" y="460.0" width="23.8" height="11.2" rx="1.5" fill="#4fc8aa" stroke="#fff" stroke-width="0.8"/>
<rect x="85.4" y="460.4" width="23.0" height="2" fill="#e9534e"/>
<text x="96.9" y="469.2" font-size="9" fill="#fff" text-anchor="middle" font-family="Liberation Sans, sans-serif">G50</text>
<rect x="68.7" y="477.8" width="28.5" height="11.3" rx="1.5" fill="#f3776b" stroke="#fff" stroke-width="0.8"/>
<text x="83.0" y="487.1" font-size="9" fill="#fff" text-anchor="middle" font-family="Liberation Sans, sans-serif">G318</text>
<rect x="41.0" y="510.6" width="32.0" height="12.4" rx="1.5" fill="#4fc8aa" stroke="#fff" stroke-width="0.8"/>
<rect x="41.4" y="511.0" width="31.2" height="2" fill="#e9534e"/>
<text x="57.0" y="520.4" font-size="9" fill="#fff" text-anchor="middle" font-family="Liberation Sans, sans-serif">G1521</text>
<rect x="108.8" y="519.8" width="21.9" height="11.9" rx="1.5" fill="#4fc8aa" stroke="#fff" stroke-width="0.8"/>
<rect x="109.2" y="520.2" width="21.1" height="2" fill="#e3b531"/>
<text x="119.8" y="529.4" font-size="9" fill="#fff" text-anchor="middle" font-family="Liberation Sans, sans-serif">S12</text>
<rect x="132.0" y="512.0" width="22.0" height="11.8" rx="1.5" fill="#4fc8aa" stroke="#fff" stroke-width="0.8"/>
<rect x="132.4" y="512.4" width="21.2" height="2" fill="#e3b531"/>
<text x="143.0" y="521.5" font-size="9" fill="#fff" text-anchor="middle" font-family="Liberation Sans, sans-serif">S32</text>
<rect x="161.0" y="554.7" width="22.0" height="11.3" rx="1.5" fill="#4fc8aa" stroke="#fff" stroke-width="0.8"/>
<rect x="161.4" y="555.1" width="21.2" height="2" fill="#e3b531"/>
<text x="172.0" y="564.0" font-size="9" fill="#fff" text-anchor="middle" font-family="Liberation Sans, sans-serif">S36</text>
<rect x="144.0" y="601.2" width="28.2" height="11.1" rx="1.5" fill="#f3776b" stroke="#fff" stroke-width="0.8"/>
<text x="158.1" y="610.4" font-size="9" fill="#fff" text-anchor="middle" font-family="Liberation Sans, sans-serif">G525</text>
<rect x="225.0" y="583.2" width="19.0" height="11.9" rx="1.5" fill="#4fc8aa" stroke="#fff" stroke-width="0.8"/>
<rect x="225.4" y="583.6" width="18.2" height="2" fill="#e3b531"/>
<text x="234.5" y="592.8" font-size="9" fill="#fff" text-anchor="middle" font-family="Liberation Sans, sans-serif">S19</text>
<rect x="421.7" y="403.8" width="18.5" height="11.4" rx="1.5" fill="#4fc8aa" stroke="#fff" stroke-width="0.8"/>
<rect x="422.1" y="404.2" width="17.7" height="2" fill="#e3b531"/>
<text x="431.0" y="413.1" font-size="9" fill="#fff" text-anchor="middle" font-family="Liberation Sans, sans-serif">S1</text>
<rect x="394.0" y="483.8" width="18.5" height="11.1" rx="1.5" fill="#4fc8aa" stroke="#fff" stroke-width="0.8"/>
<rect x="394.4" y="484.2" width="17.7" height="2" fill="#e3b531"/>
<text x="403.2" y="492.9" font-size="9" fill="#fff" text-anchor="middle" font-family="Liberation Sans, sans-serif">S3</text>
<rect x="453.2" y="254.1" width="25.0" height="12.4" rx="1.5" fill="#4fc8aa" stroke="#fff" stroke-width="0.8"/>
<rect x="453.6" y="254.5" width="24.2" height="2" fill="#e9534e"/>
<text x="465.7" y="263.9" font-size="9" fill="#fff" text-anchor="middle" font-family="Liberation Sans, sans-serif">G40</text>
<rect x="497.0" y="74.7" width="29.6" height="11.6" rx="1.5" fill="#f3776b" stroke="#fff" stroke-width="0.8"/>
<text x="511.8" y="84.1" font-size="9" fill="#fff" text-anchor="middle" font-family="Liberation Sans, sans-serif">G328</text>
<rect x="540.5" y="598.5" width="18.5" height="11.6" rx="1.5" fill="#4fc8aa" stroke="#fff" stroke-width="0.8"/>
<rect x="540.9" y="598.9" width="17.7" height="2" fill="#e3b531"/>
<text x="549.8" y="607.9" font-size="9" fill="#fff" text-anchor="middle" font-family="Liberation Sans, sans-serif">S2</text>
<rect x="548.5" y="624.0" width="18.5" height="12.0" rx="1.5" fill="#4fc8aa" stroke="#fff" stroke-width="0.8"/>
<rect x="548.9" y="624.4" width="17.7" height="2" fill="#e3b531"/>
<text x="557.8" y="633.6" font-size="9" fill="#fff" text-anchor="middle" font-family="Liberation Sans, sans-serif">S2</text>
<rect x="-3.0" y="668.0" width="7.0" height="12.0" rx="1.5" fill="#f3776b" stroke="#fff" stroke-width="0.8"/>
<text x="211.0" y="57.9" font-size="13" fill="#4f5561" text-anchor="middle" stroke="#fff" stroke-width="2.5" paint-order="stroke" stroke-linejoin="round" font-family="Liberation Sans, sans-serif">海门区</text>
<text x="418.0" y="88.9" font-size="13" fill="#4f5561" text-anchor="middle" stroke="#fff" stroke-width="2.5" paint-order="stroke" stroke-linejoin="round" font-family="Liberation Sans, sans-serif">启东市</text>
<text x="304.0" y="182.9" font-size="13" fill="#4f5561" text-anchor="middle" stroke="#fff" stroke-width="2.5" paint-order="stroke" stroke-linejoin="round" font-family="Liberation Sans, sans-serif">崇明区</text>
<text x="24.0" y="166.9" font-size="13" fill="#4f5561" text-anchor="middle" stroke="#fff" stroke-width="2.5" paint-order="stroke" stroke-linejoin="round" font-family="Liberation Sans, sans-serif">常熟市</text>
<text x="188.0" y="266.9" font-size="13" fill="#4f5561" text-anchor="middle" stroke="#fff" stroke-width="2.5" paint-order="stroke" stroke-linejoin="round" font-family="Liberation Sans, sans-serif">太仓市</text>
<text x="123.0" y="303.9" font-size="13" fill="#4f5561" text-anchor="middle" stroke="#fff" stroke-width="2.5" paint-order="stroke" stroke-linejoin="round" font-family="Liberation Sans, sans-serif">昆山市</text>
<text x="248.0" y="307.9" font-size="13" fill="#4f5561" text-anchor="middle" stroke="#fff" stroke-width="2.5" paint-order="stroke" stroke-linejoin="round" font-family="Liberation Sans, sans-serif">嘉定区</text>
<text x="345.0" y="292.9" font-size="13" fill="#4f5561" text-anchor="middle" stroke="#fff" stroke-width="2.5" paint-order="stroke" stroke-linejoin="round" font-family="Liberation Sans, sans-serif">宝山区</text>
<text x="186.0" y="422.9" font-size="13" fill="#4f5561" text-anchor="middle" stroke="#fff" stroke-width="2.5" paint-order="stroke" stroke-linejoin="round" font-family="Liberation Sans, sans-serif">青浦区</text>
<text x="298.0" y="440.9" font-size="13" fill="#4f5561" text-anchor="middle" stroke="#fff" stroke-width="2.5" paint-order="stroke" stroke-linejoin="round" font-family="Liberation Sans, sans-serif">闵行区</text>
<text x="231.0" y="481.9" font-size="13" fill="#4f5561" text-anchor="middle" stroke="#fff" stroke-width="2.5" paint-order="stroke" stroke-linejoin="round" font-family="Liberation Sans, sans-serif">松江区</text>
<text x="338.0" y="539.9" font-size="13" fill="#4f5561" text-anchor="middle" stroke="#fff" stroke-width="2.5" paint-order="stroke" stroke-linejoin="round" font-family="Liberation Sans, sans-serif">奉贤区</text>
<text x="100.0" y="583.9" font-size="13" fill="#4f5561" text-anchor="middle" stroke="#fff" stroke-width="2.5" paint-order="stroke" stroke-linejoin="round" font-family="Liberation Sans, sans-serif">嘉善县</text>
<text x="26.0" y="628.1" font-size="16" fill="#2b2f36" text-anchor="middle" stroke="#fff" stroke-width="2.5" paint-order="stroke" stroke-linejoin="round" font-family="Liberation Sans, sans-serif">嘉兴市</text>
<text x="139.0" y="660.9" font-size="13" fill="#4f5561" text-anchor="middle" stroke="#fff" stroke-width="2.5" paint-order="stroke" stroke-linejoin="round" font-family="Liberation Sans, sans-serif">平湖市</text>
<text x="281.0" y="627.9" font-size="13" fill="#4f5561" text-anchor="middle" stroke="#fff" stroke-width="2.5" paint-order="stroke" stroke-linejoin="round" font-family="Liberation Sans, sans-serif">金山区</text>
<text x="109.0" y="736.9" font-size="13" fill="#4f5561" text-anchor="middle" stroke="#fff" stroke-width="2.5" paint-order="stroke" stroke-linejoin="round" font-family="Liberation Sans, sans-serif">海盐县</text>
<text x="338.0" y="383.1" font-size="16" fill="#2b2f36" text-anchor="middle" stroke="#fff" stroke-width="2.5" paint-order="stroke" stroke-linejoin="round" font-family="Liberation Sans, sans-serif">上海市</text>
<text x="6.0" y="743.9" font-size="13" fill="#4f5561" text-anchor="middle" stroke="#fff" stroke-width="2.5" paint-order="stroke" stroke-linejoin="round" font-family="Liberation Sans, sans-serif">市</text>
<text x="55.0" y="50.0" font-size="12" fill="#2e9a62" stroke="#fff" stroke-width="2.2" paint-order="stroke" stroke-linejoin="round" font-family="Liberation Sans, sans-serif">常阴沙生态</text>
<text x="55.0" y="63.0" font-size="12" fill="#2e9a62" stroke="#fff" stroke-width="2.2" paint-order="stroke" stroke-linejoin="round" font-family="Liberation Sans, sans-serif">农业旅游区</text>
<text x="409.0" y="148.5" font-size="12" fill="#2e9a62" stroke="#fff" stroke-width="2.2" paint-order="stroke" stroke-linejoin="round" font-family="Liberation Sans, sans-serif">崇明岛北湖</text>
<text x="549.0" y="126.5" font-size="12" fill="#2e9a62" stroke="#fff" stroke-width="2.2" paint-order="stroke" stroke-linejoin="round" font-family="Liberation Sans, sans-serif">圆陀角旅游</text>
<text x="549.0" y="139.5" font-size="12" fill="#2e9a62" stroke="#fff" stroke-width="2.2" paint-order="stroke" stroke-linejoin="round" font-family="Liberation Sans, sans-serif">度假区</text>
<text x="576.0" y="225.5" font-size="12" fill="#2e9a62" stroke="#fff" stroke-width="2.2" paint-order="stroke" stroke-linejoin="round" font-family="Liberation Sans, sans-serif">上海崇明东滩鸟类</text>
<text x="576.0" y="238.5" font-size="12" fill="#2e9a62" stroke="#fff" stroke-width="2.2" paint-order="stroke" stroke-linejoin="round" font-family="Liberation Sans, sans-serif">国家级自然保护区</text>
<text x="34.0" y="201.5" font-size="12" fill="#2e9a62" stroke="#fff" stroke-width="2.2" paint-order="stroke" stroke-linejoin="round" font-family="Liberation Sans, sans-serif">昆承湖</text>
<text x="43.0" y="282.5" font-size="12" fill="#2e9a62" stroke="#fff" stroke-width="2.2" paint-order="stroke" stroke-linejoin="round" font-family="Liberation Sans, sans-serif">阳澄湖</text>
<text x="12.0" y="340.5" font-size="12" fill="#2e9a62" stroke="#fff" stroke-width="2.2" paint-order="stroke" stroke-linejoin="round" font-family="Liberation Sans, sans-serif">金鸡湖景区</text>
<text x="11.0" y="413.0" font-size="12" fill="#2e9a62" stroke="#fff" stroke-width="2.2" paint-order="stroke" stroke-linejoin="round" font-family="Liberation Sans, sans-serif">明镜荡水利</text>
<text x="35.6" y="426.0" font-size="12" fill="#2e9a62" stroke="#fff" stroke-width="2.2" paint-order="stroke" stroke-linejoin="round" font-family="Liberation Sans, sans-serif">风景区</text>
<text x="390.0" y="586.5" font-size="12" fill="#2e9a62" stroke="#fff" stroke-width="2.2" paint-order="stroke" stroke-linejoin="round" font-family="Liberation Sans, sans-serif">碧海金沙</text>
<text x="200.0" y="695.5" font-size="12" fill="#2e9a62" stroke="#fff" stroke-width="2.2" paint-order="stroke" stroke-linejoin="round" font-family="Liberation Sans, sans-serif">九龙山风景区</text>
<text x="78.0" y="94.5" font-size="12" fill="#c4573b" stroke="#fff" stroke-width="2.2" paint-order="stroke" stroke-linejoin="round" font-family="Liberation Sans, sans-serif">铁黄沙</text>
<text x="219.0" y="394.5" font-size="12" fill="#3d6fd1" stroke="#fff" stroke-width="2.2" paint-order="stroke" stroke-linejoin="round" font-family="Liberation Sans, sans-serif">上海虹桥</text>
<text x="219.0" y="407.5" font-size="12" fill="#3d6fd1" stroke="#fff" stroke-width="2.2" paint-order="stroke" stroke-linejoin="round" font-family="Liberation Sans, sans-serif">国际机场</text>
<text x="495.0" y="415.5" font-size="12" fill="#3d6fd1" stroke="#fff" stroke-width="2.2" paint-order="stroke" stroke-linejoin="round" font-family="Liberation Sans, sans-serif">上海浦东</text>
<text x="495.0" y="428.5" font-size="12" fill="#3d6fd1" stroke="#fff" stroke-width="2.2" paint-order="stroke" stroke-linejoin="round" font-family="Liberation Sans, sans-serif">国际机场</text>
<path d="M41.0 57.0 a8.5 8.5 0 1 1 0.01 0 z" fill="#2fa866"/>
<circle cx="41.0" cy="48.6" r="8.6" fill="#2fa866" stroke="#fff" stroke-width="1"/>
<path d="M37.0 55.5 l4 5 l4 -5z" fill="#2fa866"/>
<path d="M41.0 44.2 l-2.2 4.5h1.4l-2 3.2h2.4v2h0.8v-2h2.4l-2-3.2h1.4z" fill="#fff"/>
<path d="M398.0 151.0 a8.5 8.5 0 1 1 0.01 0 z" fill="#2fa866"/>
<circle cx="398.0" cy="142.6" r="8.6" fill="#2fa866" stroke="#fff" stroke-width="1"/>
<path d="M394.0 149.5 l4 5 l4 -5z" fill="#2fa866"/>
<path d="M398.0 138.2 l-2.2 4.5h1.4l-2 3.2h2.4v2h0.8v-2h2.4l-2-3.2h1.4z" fill="#fff"/>
<path d="M535.0 135.0 a8.5 8.5 0 1 1 0.01 0 z" fill="#2fa866"/>
<circle cx="535.0" cy="126.6" r="8.6" fill="#2fa866" stroke="#fff" stroke-width="1"/>
<path d="M531.0 133.5 l4 5 l4 -5z" fill="#2fa866"/>
<path d="M535.0 122.2 l-2.2 4.5h1.4l-2 3.2h2.4v2h0.8v-2h2.4l-2-3.2h1.4z" fill="#fff"/>
<path d="M562.0 233.0 a8.5 8.5 0 1 1 0.01 0 z" fill="#2fa866"/>
<circle cx="562.0" cy="224.6" r="8.6" fill="#2fa866" stroke="#fff" stroke-width="1"/>
<path d="M558.0 231.5 l4 5 l4 -5z" fill="#2fa866"/>
<path d="M562.0 220.2 l-2.2 4.5h1.4l-2 3.2h2.4v2h0.8v-2h2.4l-2-3.2h1.4z" fill="#fff"/>
<path d="M23.0 205.0 a8.5 8.5 0 1 1 0.01 0 z" fill="#2fa866"/>
<circle cx="23.0" cy="196.6" r="8.6" fill="#2fa866" stroke="#fff" stroke-width="1"/>
<path d="M19.0 203.5 l4 5 l4 -5z" fill="#2fa866"/>
<path d="M23.0 192.2 l-2.2 4.5h1.4l-2 3.2h2.4v2h0.8v-2h2.4l-2-3.2h1.4z" fill="#fff"/>
<path d="M33.0 285.0 a8.5 8.5 0 1 1 0.01 0 z" fill="#2fa866"/>
<circle cx="33.0" cy="276.6" r="8.6" fill="#2fa866" stroke="#fff" stroke-width="1"/>
<path d="M29.0 283.5 l4 5 l4 -5z" fill="#2fa866"/>
<path d="M33.0 272.2 l-2.2 4.5h1.4l-2 3.2h2.4v2h0.8v-2h2.4l-2-3.2h1.4z" fill="#fff"/>
<path d="M7.0 347.0 a8.5 8.5 0 1 1 0.01 0 z" fill="#2fa866"/>
<circle cx="7.0" cy="338.6" r="8.6" fill="#2fa866" stroke="#fff" stroke-width="1"/>
<path d="M3.0 345.5 l4 5 l4 -5z" fill="#2fa866"/>
<path d="M7.0 334.2 l-2.2 4.5h1.4l-2 3.2h2.4v2h0.8v-2h2.4l-2-3.2h1.4z" fill="#fff"/>
<path d="M83.0 422.0 a8.5 8.5 0 1 1 0.01 0 z" fill="#2fa866"/>
<circle cx="83.0" cy="413.6" r="8.6" fill="#2fa866" stroke="#fff" stroke-width="1"/>
<path d="M79.0 420.5 l4 5 l4 -5z" fill="#2fa866"/>
<path d="M83.0 409.2 l-2.2 4.5h1.4l-2 3.2h2.4v2h0.8v-2h2.4l-2-3.2h1.4z" fill="#fff"/>
<path d="M381.0 588.0 a8.5 8.5 0 1 1 0.01 0 z" fill="#2fa866"/>
<circle cx="381.0" cy="579.6" r="8.6" fill="#2fa866" stroke="#fff" stroke-width="1"/>
<path d="M377.0 586.5 l4 5 l4 -5z" fill="#2fa866"/>
<path d="M381.0 575.2 l-2.2 4.5h1.4l-2 3.2h2.4v2h0.8v-2h2.4l-2-3.2h1.4z" fill="#fff"/>
<path d="M189.0 699.0 a8.5 8.5 0 1 1 0.01 0 z" fill="#2fa866"/>
<circle cx="189.0" cy="690.6" r="8.6" fill="#2fa866" stroke="#fff" stroke-width="1"/>
<path d="M185.0 697.5 l4 5 l4 -5z" fill="#2fa866"/>
<path d="M189.0 686.2 l-2.2 4.5h1.4l-2 3.2h2.4v2h0.8v-2h2.4l-2-3.2h1.4z" fill="#fff"/>
<path d="M66.0 96.0 a8.5 8.5 0 1 1 0.01 0 z" fill="#c9553a"/>
<circle cx="66.0" cy="87.6" r="8.6" fill="#c9553a" stroke="#fff" stroke-width="1"/>
<path d="M62.0 94.5 l4 5 l4 -5z" fill="#c9553a"/>
<path d="M66.0 83.2 l-2.2 4.5h1.4l-2 3.2h2.4v2h0.8v-2h2.4l-2-3.2h1.4z" fill="#fff"/>
<path d="M279.0 383.0 h18 v15 h-6 l-3 4 l-3 -4 h-6z" fill="#4479e0" transform="translate(-9 0)" stroke="#fff" stroke-width="0.8"/>
<path d="M279.0 385.5 l1 4 l5 2.5 v1.2 l-5 -1.2 l-0.5 3 l1.5 1 v0.8 l-2 -0.5 l-2 0.5 v-0.8 l1.5 -1 l-0.5 -3 l-5 1.2 v-1.2 l5 -2.5z" fill="#fff"/>
<path d="M482.0 406.0 h18 v15 h-6 l-3 4 l-3 -4 h-6z" fill="#4479e0" transform="translate(-9 0)" stroke="#fff" stroke-width="0.8"/>
<path d="M482.0 408.5 l1 4 l5 2.5 v1.2 l-5 -1.2 l-0.5 3 l1.5 1 v0.8 l-2 -0.5 l-2 0.5 v-0.8 l1.5 -1 l-0.5 -3 l-5 1.2 v-1.2 l5 -2.5z" fill="#fff"/>
<ellipse cx="371.5" cy="385.0" rx="8" ry="4" fill="#777" opacity="0.75" transform="rotate(-10 371.5 385.0)"/>
<path d="M354.0 360.0 c-5.5 0 -9.3 4 -9.3 9 c0 6 9.3 15 9.3 15 c0 0 9.3 -9 9.3 -15 c0 -5 -3.8 -9 -9.3 -9z" fill="#e8272b"/></svg><!--/MAP--></div>
<div class="a" style="left:1215px;top:178px;width:279px;height:36px;background:#fff;border:1px solid #dcdfe6;border-radius:4px 0 0 4px;border-right:none"></div>
<div class="a t14" style="left:1231px;top:188px;color:#c0c4cc">请输入地区</div>
<div class="a" style="left:1493px;top:178px;width:71px;height:36px;background:#f5f7fa;border:1px solid #dcdfe6;border-radius:0 4px 4px 0;color:#909399;font-size:14px;line-height:34px;text-align:center">查询</div>
<svg class="a" style="left:1896px;top:-8px;z-index:5" width="24" height="24" viewBox="0 0 24 24"><path d="M7.5 8.5A14 14 0 0 1 17 15.5" fill="none" stroke="#ebebeb" stroke-width="2.4"/></svg>
</body></html>
